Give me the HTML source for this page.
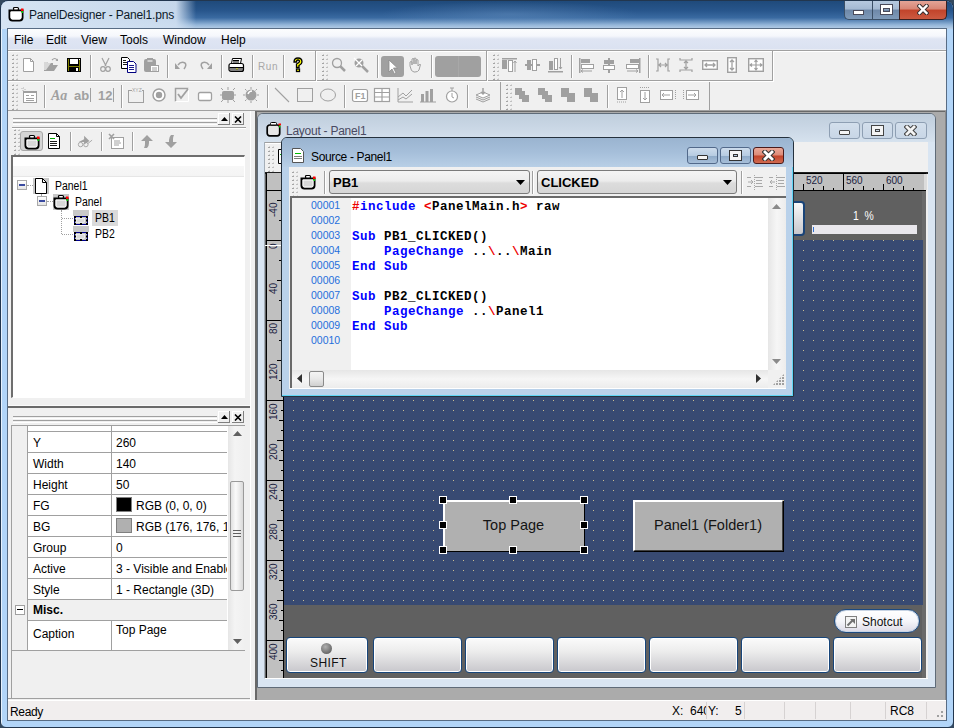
<!DOCTYPE html>
<html><head><meta charset="utf-8">
<style>
*{margin:0;padding:0;box-sizing:border-box}
html,body{width:954px;height:728px;overflow:hidden;background:#34495f}
body{position:relative;font-family:"Liberation Sans",sans-serif;font-size:12px;color:#000;line-height:1}
div,svg{position:absolute}
span{position:static}
.t{white-space:nowrap}
.sep{width:2px;border-left:1px solid #a0a0a0;border-right:1px solid #fff}
.grip{width:7px;background-image:radial-gradient(circle at 1.2px 1.2px,#b8b8b8 0.9px,transparent 1.4px);background-size:4px 4px}
.ic{width:16px;height:16px;overflow:visible}
.cb{border-radius:3px}

</style></head><body>
<!-- outer frame -->
<div style="left:0;top:0;width:954px;height:728px;border:1px solid #22364e;border-radius:8px 8px 6px 6px;background:linear-gradient(90deg,#e8f2fc 0,#e8f2fc 1px,#b2d5f8 1px,#b2d5f8 952px,#e8f2fc 952px)"></div>
<!-- title bar -->
<div style="left:1px;top:1px;width:952px;height:28px;border-radius:7px 7px 0 0;background:linear-gradient(180deg,#1f4a7b 0,#28568c 35%,#3a6aa1 60%,#93b5d8 85%,#b9d0e8 100%)"></div>
<div style="left:1px;top:1px;width:230px;height:28px;border-radius:7px 0 0 0;background:linear-gradient(90deg,rgba(214,228,243,1) 0,rgba(206,222,240,.95) 175px,rgba(206,222,240,0) 195px)"></div>
<div style="left:380px;top:1px;width:260px;height:22px;background:radial-gradient(ellipse at 50% 60%,rgba(120,160,205,.35),rgba(120,160,205,0) 70%)"></div>
<div class="t" style="left:29px;top:9px;font-size:12px;color:#0d1a2a;letter-spacing:-0.17px">PanelDesigner - Panel1.pns</div>
<!-- app icon -->
<svg class="ic" style="left:8px;top:6px" viewBox="0 0 16 16"><path d="M1.5 4.5h13v7q0 3-3 3h-7q-3 0-3-3z" fill="#fff" stroke="#000" stroke-width="2"/><path d="M3 6h10v5.5q0 1.5-1.5 1.5h-7Q3 13 3 11.5z" fill="#fff" stroke="#fff" stroke-width="1"/><rect x="5.5" y="1.5" width="5" height="2.5" rx="1" fill="#fff" stroke="#000" stroke-width="1.2"/><rect x="13" y="2.5" width="2.5" height="2.5" fill="#f00"/><rect x="13.5" y="5" width="1.5" height="2" fill="#0c0"/></svg>
<!-- caption buttons -->
<div style="left:844px;top:1px;width:28px;height:19px;border:1px solid #3b4f66;border-top:none;border-right:none;border-radius:0 0 0 5px;background:linear-gradient(180deg,#b6c9df 0,#a4b9d2 45%,#6e88a8 50%,#7f9ab9 100%)"></div>
<div style="left:872px;top:1px;width:27px;height:19px;border:1px solid #3b4f66;border-top:none;border-right:none;background:linear-gradient(180deg,#b6c9df 0,#a4b9d2 45%,#6e88a8 50%,#7f9ab9 100%)"></div>
<div style="left:899px;top:1px;width:48px;height:19px;border:1px solid #3b2020;border-top:none;border-radius:0 0 5px 0;background:linear-gradient(180deg,#e3a497 0,#d88574 45%,#c2432a 50%,#cc5a41 100%)"></div>
<div style="left:853px;top:10px;width:11px;height:5px;background:#fff;border:1px solid #4a4a5a"></div>
<div style="left:881px;top:5px;width:11px;height:9px;border:2px solid #fff;border-top-width:3px;box-shadow:0 0 0 1px #4a4a5a, inset 0 0 0 1px #4a4a5a"></div>
<svg style="left:917px;top:4px" width="12" height="11" viewBox="0 0 12 11"><path d="M2.5 2L9.5 9M9.5 2L2.5 9" stroke="#3a3030" stroke-width="4.4" stroke-linecap="square"/><path d="M2.5 2L9.5 9M9.5 2L2.5 9" stroke="#fff" stroke-width="2.4" stroke-linecap="square"/></svg>
<!-- client area -->
<div style="left:7px;top:28px;width:940px;height:693px;background:#f0f0f0;border:1px solid #586c84"></div>
<!-- menu bar -->
<div style="left:8px;top:29px;width:938px;height:20px;background:linear-gradient(180deg,#fcfdfe 0,#f5f7fc 35%,#dfe5f3 50%,#dbe2f1 100%)"></div>
<div style="left:8px;top:49px;width:938px;height:1px;background:#e9ecf3"></div>
<div style="left:8px;top:50px;width:938px;height:1px;background:#a0a0a0"></div>
<div style="left:8px;top:51px;width:938px;height:1px;background:#fff"></div>
<div class="t" style="left:14px;top:34px">File</div>
<div class="t" style="left:46px;top:34px">Edit</div>
<div class="t" style="left:81px;top:34px">View</div>
<div class="t" style="left:120px;top:34px">Tools</div>
<div class="t" style="left:163px;top:34px">Window</div>
<div class="t" style="left:221px;top:34px">Help</div>

<!-- toolbar bands row1 -->
<div style="left:8px;top:51px;width:309px;height:31px;border-right:1px solid #fff;border-bottom:1px solid #fff"><div style="left:0;top:0;width:308px;height:30px;border-right:1px solid #a0a0a0;border-bottom:1px solid #a0a0a0"></div></div>
<div style="left:317px;top:51px;width:171px;height:31px;border-right:1px solid #fff;border-bottom:1px solid #fff"><div style="left:0;top:0;width:170px;height:30px;border-right:1px solid #a0a0a0;border-bottom:1px solid #a0a0a0"></div></div>
<div style="left:488px;top:51px;width:286px;height:31px;border-right:1px solid #fff;border-bottom:1px solid #fff"><div style="left:0;top:0;width:285px;height:30px;border-right:1px solid #a0a0a0;border-bottom:1px solid #a0a0a0"></div></div>
<!-- row2 -->
<div style="left:8px;top:82px;width:493px;height:30px;"><div style="left:0;top:0;width:493px;height:29px;border-right:1px solid #a0a0a0;border-bottom:1px solid #a0a0a0"></div></div>
<div style="left:502px;top:82px;width:208px;height:30px;"><div style="left:0;top:0;width:208px;height:29px;border-right:1px solid #a0a0a0;border-bottom:1px solid #a0a0a0"></div></div>
<div style="left:8px;top:110px;width:938px;height:1px;background:#a0a0a0"></div>

<!-- grips -->
<div style="left:0;top:0;width:0;height:0"><div style="left:12px;top:55px;width:1px;height:1px;background:#a4a4a4"></div><div style="left:13px;top:54px;width:1px;height:1px;background:#cfcfcf"></div><div style="left:13px;top:55px;width:1px;height:1px;background:#a4a4a4"></div><div style="left:16px;top:55px;width:1px;height:1px;background:#c0c0c0"></div><div style="left:17px;top:54px;width:1px;height:1px;background:#dadada"></div><div style="left:17px;top:55px;width:1px;height:1px;background:#c0c0c0"></div><div style="left:12px;top:59px;width:1px;height:1px;background:#a4a4a4"></div><div style="left:13px;top:58px;width:1px;height:1px;background:#cfcfcf"></div><div style="left:13px;top:59px;width:1px;height:1px;background:#a4a4a4"></div><div style="left:16px;top:59px;width:1px;height:1px;background:#c0c0c0"></div><div style="left:17px;top:58px;width:1px;height:1px;background:#dadada"></div><div style="left:17px;top:59px;width:1px;height:1px;background:#c0c0c0"></div><div style="left:12px;top:63px;width:1px;height:1px;background:#a4a4a4"></div><div style="left:13px;top:62px;width:1px;height:1px;background:#cfcfcf"></div><div style="left:13px;top:63px;width:1px;height:1px;background:#a4a4a4"></div><div style="left:16px;top:63px;width:1px;height:1px;background:#c0c0c0"></div><div style="left:17px;top:62px;width:1px;height:1px;background:#dadada"></div><div style="left:17px;top:63px;width:1px;height:1px;background:#c0c0c0"></div><div style="left:12px;top:67px;width:1px;height:1px;background:#a4a4a4"></div><div style="left:13px;top:66px;width:1px;height:1px;background:#cfcfcf"></div><div style="left:13px;top:67px;width:1px;height:1px;background:#a4a4a4"></div><div style="left:16px;top:67px;width:1px;height:1px;background:#c0c0c0"></div><div style="left:17px;top:66px;width:1px;height:1px;background:#dadada"></div><div style="left:17px;top:67px;width:1px;height:1px;background:#c0c0c0"></div><div style="left:12px;top:71px;width:1px;height:1px;background:#a4a4a4"></div><div style="left:13px;top:70px;width:1px;height:1px;background:#cfcfcf"></div><div style="left:13px;top:71px;width:1px;height:1px;background:#a4a4a4"></div><div style="left:16px;top:71px;width:1px;height:1px;background:#c0c0c0"></div><div style="left:17px;top:70px;width:1px;height:1px;background:#dadada"></div><div style="left:17px;top:71px;width:1px;height:1px;background:#c0c0c0"></div><div style="left:12px;top:75px;width:1px;height:1px;background:#a4a4a4"></div><div style="left:13px;top:74px;width:1px;height:1px;background:#cfcfcf"></div><div style="left:13px;top:75px;width:1px;height:1px;background:#a4a4a4"></div><div style="left:16px;top:75px;width:1px;height:1px;background:#c0c0c0"></div><div style="left:17px;top:74px;width:1px;height:1px;background:#dadada"></div><div style="left:17px;top:75px;width:1px;height:1px;background:#c0c0c0"></div><div style="left:12px;top:79px;width:1px;height:1px;background:#a4a4a4"></div><div style="left:13px;top:78px;width:1px;height:1px;background:#cfcfcf"></div><div style="left:13px;top:79px;width:1px;height:1px;background:#a4a4a4"></div><div style="left:16px;top:79px;width:1px;height:1px;background:#c0c0c0"></div><div style="left:17px;top:78px;width:1px;height:1px;background:#dadada"></div><div style="left:17px;top:79px;width:1px;height:1px;background:#c0c0c0"></div></div>
<div style="left:0;top:0;width:0;height:0"><div style="left:322px;top:55px;width:1px;height:1px;background:#a4a4a4"></div><div style="left:323px;top:54px;width:1px;height:1px;background:#cfcfcf"></div><div style="left:323px;top:55px;width:1px;height:1px;background:#a4a4a4"></div><div style="left:326px;top:55px;width:1px;height:1px;background:#c0c0c0"></div><div style="left:327px;top:54px;width:1px;height:1px;background:#dadada"></div><div style="left:327px;top:55px;width:1px;height:1px;background:#c0c0c0"></div><div style="left:322px;top:59px;width:1px;height:1px;background:#a4a4a4"></div><div style="left:323px;top:58px;width:1px;height:1px;background:#cfcfcf"></div><div style="left:323px;top:59px;width:1px;height:1px;background:#a4a4a4"></div><div style="left:326px;top:59px;width:1px;height:1px;background:#c0c0c0"></div><div style="left:327px;top:58px;width:1px;height:1px;background:#dadada"></div><div style="left:327px;top:59px;width:1px;height:1px;background:#c0c0c0"></div><div style="left:322px;top:63px;width:1px;height:1px;background:#a4a4a4"></div><div style="left:323px;top:62px;width:1px;height:1px;background:#cfcfcf"></div><div style="left:323px;top:63px;width:1px;height:1px;background:#a4a4a4"></div><div style="left:326px;top:63px;width:1px;height:1px;background:#c0c0c0"></div><div style="left:327px;top:62px;width:1px;height:1px;background:#dadada"></div><div style="left:327px;top:63px;width:1px;height:1px;background:#c0c0c0"></div><div style="left:322px;top:67px;width:1px;height:1px;background:#a4a4a4"></div><div style="left:323px;top:66px;width:1px;height:1px;background:#cfcfcf"></div><div style="left:323px;top:67px;width:1px;height:1px;background:#a4a4a4"></div><div style="left:326px;top:67px;width:1px;height:1px;background:#c0c0c0"></div><div style="left:327px;top:66px;width:1px;height:1px;background:#dadada"></div><div style="left:327px;top:67px;width:1px;height:1px;background:#c0c0c0"></div><div style="left:322px;top:71px;width:1px;height:1px;background:#a4a4a4"></div><div style="left:323px;top:70px;width:1px;height:1px;background:#cfcfcf"></div><div style="left:323px;top:71px;width:1px;height:1px;background:#a4a4a4"></div><div style="left:326px;top:71px;width:1px;height:1px;background:#c0c0c0"></div><div style="left:327px;top:70px;width:1px;height:1px;background:#dadada"></div><div style="left:327px;top:71px;width:1px;height:1px;background:#c0c0c0"></div><div style="left:322px;top:75px;width:1px;height:1px;background:#a4a4a4"></div><div style="left:323px;top:74px;width:1px;height:1px;background:#cfcfcf"></div><div style="left:323px;top:75px;width:1px;height:1px;background:#a4a4a4"></div><div style="left:326px;top:75px;width:1px;height:1px;background:#c0c0c0"></div><div style="left:327px;top:74px;width:1px;height:1px;background:#dadada"></div><div style="left:327px;top:75px;width:1px;height:1px;background:#c0c0c0"></div><div style="left:322px;top:79px;width:1px;height:1px;background:#a4a4a4"></div><div style="left:323px;top:78px;width:1px;height:1px;background:#cfcfcf"></div><div style="left:323px;top:79px;width:1px;height:1px;background:#a4a4a4"></div><div style="left:326px;top:79px;width:1px;height:1px;background:#c0c0c0"></div><div style="left:327px;top:78px;width:1px;height:1px;background:#dadada"></div><div style="left:327px;top:79px;width:1px;height:1px;background:#c0c0c0"></div></div>
<div style="left:0;top:0;width:0;height:0"><div style="left:493px;top:55px;width:1px;height:1px;background:#a4a4a4"></div><div style="left:494px;top:54px;width:1px;height:1px;background:#cfcfcf"></div><div style="left:494px;top:55px;width:1px;height:1px;background:#a4a4a4"></div><div style="left:497px;top:55px;width:1px;height:1px;background:#c0c0c0"></div><div style="left:498px;top:54px;width:1px;height:1px;background:#dadada"></div><div style="left:498px;top:55px;width:1px;height:1px;background:#c0c0c0"></div><div style="left:493px;top:59px;width:1px;height:1px;background:#a4a4a4"></div><div style="left:494px;top:58px;width:1px;height:1px;background:#cfcfcf"></div><div style="left:494px;top:59px;width:1px;height:1px;background:#a4a4a4"></div><div style="left:497px;top:59px;width:1px;height:1px;background:#c0c0c0"></div><div style="left:498px;top:58px;width:1px;height:1px;background:#dadada"></div><div style="left:498px;top:59px;width:1px;height:1px;background:#c0c0c0"></div><div style="left:493px;top:63px;width:1px;height:1px;background:#a4a4a4"></div><div style="left:494px;top:62px;width:1px;height:1px;background:#cfcfcf"></div><div style="left:494px;top:63px;width:1px;height:1px;background:#a4a4a4"></div><div style="left:497px;top:63px;width:1px;height:1px;background:#c0c0c0"></div><div style="left:498px;top:62px;width:1px;height:1px;background:#dadada"></div><div style="left:498px;top:63px;width:1px;height:1px;background:#c0c0c0"></div><div style="left:493px;top:67px;width:1px;height:1px;background:#a4a4a4"></div><div style="left:494px;top:66px;width:1px;height:1px;background:#cfcfcf"></div><div style="left:494px;top:67px;width:1px;height:1px;background:#a4a4a4"></div><div style="left:497px;top:67px;width:1px;height:1px;background:#c0c0c0"></div><div style="left:498px;top:66px;width:1px;height:1px;background:#dadada"></div><div style="left:498px;top:67px;width:1px;height:1px;background:#c0c0c0"></div><div style="left:493px;top:71px;width:1px;height:1px;background:#a4a4a4"></div><div style="left:494px;top:70px;width:1px;height:1px;background:#cfcfcf"></div><div style="left:494px;top:71px;width:1px;height:1px;background:#a4a4a4"></div><div style="left:497px;top:71px;width:1px;height:1px;background:#c0c0c0"></div><div style="left:498px;top:70px;width:1px;height:1px;background:#dadada"></div><div style="left:498px;top:71px;width:1px;height:1px;background:#c0c0c0"></div><div style="left:493px;top:75px;width:1px;height:1px;background:#a4a4a4"></div><div style="left:494px;top:74px;width:1px;height:1px;background:#cfcfcf"></div><div style="left:494px;top:75px;width:1px;height:1px;background:#a4a4a4"></div><div style="left:497px;top:75px;width:1px;height:1px;background:#c0c0c0"></div><div style="left:498px;top:74px;width:1px;height:1px;background:#dadada"></div><div style="left:498px;top:75px;width:1px;height:1px;background:#c0c0c0"></div><div style="left:493px;top:79px;width:1px;height:1px;background:#a4a4a4"></div><div style="left:494px;top:78px;width:1px;height:1px;background:#cfcfcf"></div><div style="left:494px;top:79px;width:1px;height:1px;background:#a4a4a4"></div><div style="left:497px;top:79px;width:1px;height:1px;background:#c0c0c0"></div><div style="left:498px;top:78px;width:1px;height:1px;background:#dadada"></div><div style="left:498px;top:79px;width:1px;height:1px;background:#c0c0c0"></div></div>
<div style="left:0;top:0;width:0;height:0"><div style="left:12px;top:85px;width:1px;height:1px;background:#a4a4a4"></div><div style="left:13px;top:84px;width:1px;height:1px;background:#cfcfcf"></div><div style="left:13px;top:85px;width:1px;height:1px;background:#a4a4a4"></div><div style="left:16px;top:85px;width:1px;height:1px;background:#c0c0c0"></div><div style="left:17px;top:84px;width:1px;height:1px;background:#dadada"></div><div style="left:17px;top:85px;width:1px;height:1px;background:#c0c0c0"></div><div style="left:12px;top:89px;width:1px;height:1px;background:#a4a4a4"></div><div style="left:13px;top:88px;width:1px;height:1px;background:#cfcfcf"></div><div style="left:13px;top:89px;width:1px;height:1px;background:#a4a4a4"></div><div style="left:16px;top:89px;width:1px;height:1px;background:#c0c0c0"></div><div style="left:17px;top:88px;width:1px;height:1px;background:#dadada"></div><div style="left:17px;top:89px;width:1px;height:1px;background:#c0c0c0"></div><div style="left:12px;top:93px;width:1px;height:1px;background:#a4a4a4"></div><div style="left:13px;top:92px;width:1px;height:1px;background:#cfcfcf"></div><div style="left:13px;top:93px;width:1px;height:1px;background:#a4a4a4"></div><div style="left:16px;top:93px;width:1px;height:1px;background:#c0c0c0"></div><div style="left:17px;top:92px;width:1px;height:1px;background:#dadada"></div><div style="left:17px;top:93px;width:1px;height:1px;background:#c0c0c0"></div><div style="left:12px;top:97px;width:1px;height:1px;background:#a4a4a4"></div><div style="left:13px;top:96px;width:1px;height:1px;background:#cfcfcf"></div><div style="left:13px;top:97px;width:1px;height:1px;background:#a4a4a4"></div><div style="left:16px;top:97px;width:1px;height:1px;background:#c0c0c0"></div><div style="left:17px;top:96px;width:1px;height:1px;background:#dadada"></div><div style="left:17px;top:97px;width:1px;height:1px;background:#c0c0c0"></div><div style="left:12px;top:101px;width:1px;height:1px;background:#a4a4a4"></div><div style="left:13px;top:100px;width:1px;height:1px;background:#cfcfcf"></div><div style="left:13px;top:101px;width:1px;height:1px;background:#a4a4a4"></div><div style="left:16px;top:101px;width:1px;height:1px;background:#c0c0c0"></div><div style="left:17px;top:100px;width:1px;height:1px;background:#dadada"></div><div style="left:17px;top:101px;width:1px;height:1px;background:#c0c0c0"></div><div style="left:12px;top:105px;width:1px;height:1px;background:#a4a4a4"></div><div style="left:13px;top:104px;width:1px;height:1px;background:#cfcfcf"></div><div style="left:13px;top:105px;width:1px;height:1px;background:#a4a4a4"></div><div style="left:16px;top:105px;width:1px;height:1px;background:#c0c0c0"></div><div style="left:17px;top:104px;width:1px;height:1px;background:#dadada"></div><div style="left:17px;top:105px;width:1px;height:1px;background:#c0c0c0"></div><div style="left:12px;top:109px;width:1px;height:1px;background:#a4a4a4"></div><div style="left:13px;top:108px;width:1px;height:1px;background:#cfcfcf"></div><div style="left:13px;top:109px;width:1px;height:1px;background:#a4a4a4"></div><div style="left:16px;top:109px;width:1px;height:1px;background:#c0c0c0"></div><div style="left:17px;top:108px;width:1px;height:1px;background:#dadada"></div><div style="left:17px;top:109px;width:1px;height:1px;background:#c0c0c0"></div></div>
<div style="left:0;top:0;width:0;height:0"><div style="left:506px;top:85px;width:1px;height:1px;background:#a4a4a4"></div><div style="left:507px;top:84px;width:1px;height:1px;background:#cfcfcf"></div><div style="left:507px;top:85px;width:1px;height:1px;background:#a4a4a4"></div><div style="left:510px;top:85px;width:1px;height:1px;background:#c0c0c0"></div><div style="left:511px;top:84px;width:1px;height:1px;background:#dadada"></div><div style="left:511px;top:85px;width:1px;height:1px;background:#c0c0c0"></div><div style="left:506px;top:89px;width:1px;height:1px;background:#a4a4a4"></div><div style="left:507px;top:88px;width:1px;height:1px;background:#cfcfcf"></div><div style="left:507px;top:89px;width:1px;height:1px;background:#a4a4a4"></div><div style="left:510px;top:89px;width:1px;height:1px;background:#c0c0c0"></div><div style="left:511px;top:88px;width:1px;height:1px;background:#dadada"></div><div style="left:511px;top:89px;width:1px;height:1px;background:#c0c0c0"></div><div style="left:506px;top:93px;width:1px;height:1px;background:#a4a4a4"></div><div style="left:507px;top:92px;width:1px;height:1px;background:#cfcfcf"></div><div style="left:507px;top:93px;width:1px;height:1px;background:#a4a4a4"></div><div style="left:510px;top:93px;width:1px;height:1px;background:#c0c0c0"></div><div style="left:511px;top:92px;width:1px;height:1px;background:#dadada"></div><div style="left:511px;top:93px;width:1px;height:1px;background:#c0c0c0"></div><div style="left:506px;top:97px;width:1px;height:1px;background:#a4a4a4"></div><div style="left:507px;top:96px;width:1px;height:1px;background:#cfcfcf"></div><div style="left:507px;top:97px;width:1px;height:1px;background:#a4a4a4"></div><div style="left:510px;top:97px;width:1px;height:1px;background:#c0c0c0"></div><div style="left:511px;top:96px;width:1px;height:1px;background:#dadada"></div><div style="left:511px;top:97px;width:1px;height:1px;background:#c0c0c0"></div><div style="left:506px;top:101px;width:1px;height:1px;background:#a4a4a4"></div><div style="left:507px;top:100px;width:1px;height:1px;background:#cfcfcf"></div><div style="left:507px;top:101px;width:1px;height:1px;background:#a4a4a4"></div><div style="left:510px;top:101px;width:1px;height:1px;background:#c0c0c0"></div><div style="left:511px;top:100px;width:1px;height:1px;background:#dadada"></div><div style="left:511px;top:101px;width:1px;height:1px;background:#c0c0c0"></div><div style="left:506px;top:105px;width:1px;height:1px;background:#a4a4a4"></div><div style="left:507px;top:104px;width:1px;height:1px;background:#cfcfcf"></div><div style="left:507px;top:105px;width:1px;height:1px;background:#a4a4a4"></div><div style="left:510px;top:105px;width:1px;height:1px;background:#c0c0c0"></div><div style="left:511px;top:104px;width:1px;height:1px;background:#dadada"></div><div style="left:511px;top:105px;width:1px;height:1px;background:#c0c0c0"></div><div style="left:506px;top:109px;width:1px;height:1px;background:#a4a4a4"></div><div style="left:507px;top:108px;width:1px;height:1px;background:#cfcfcf"></div><div style="left:507px;top:109px;width:1px;height:1px;background:#a4a4a4"></div><div style="left:510px;top:109px;width:1px;height:1px;background:#c0c0c0"></div><div style="left:511px;top:108px;width:1px;height:1px;background:#dadada"></div><div style="left:511px;top:109px;width:1px;height:1px;background:#c0c0c0"></div></div>

<!-- separators row1 -->
<div class="sep" style="left:90px;top:55px;height:23px"></div>
<div class="sep" style="left:167px;top:55px;height:23px"></div>
<div class="sep" style="left:221px;top:55px;height:23px"></div>
<div class="sep" style="left:252px;top:55px;height:23px"></div>
<div class="sep" style="left:283px;top:55px;height:23px"></div>
<div class="sep" style="left:377px;top:55px;height:23px"></div>
<div class="sep" style="left:431px;top:55px;height:23px"></div>
<div class="sep" style="left:571px;top:55px;height:23px"></div>
<div class="sep" style="left:648px;top:55px;height:23px"></div>
<!-- separators row2 -->
<div class="sep" style="left:44px;top:85px;height:23px"></div>
<div class="sep" style="left:121px;top:85px;height:23px"></div>
<div class="sep" style="left:267px;top:85px;height:23px"></div>
<div class="sep" style="left:344px;top:85px;height:23px"></div>
<div class="sep" style="left:467px;top:85px;height:23px"></div>
<div class="sep" style="left:607px;top:85px;height:23px"></div>

<!-- row1 icons -->
<svg class="ic" style="left:22px;top:57px" viewBox="0 0 16 16"><path d="M1.5 1.5h7l3 3v10h-10z" fill="#fff" stroke="#a0a0a0"/><path d="M8.5 1.5v3h3" fill="none" stroke="#a0a0a0"/></svg>
<svg class="ic" style="left:43px;top:57px" viewBox="0 0 16 16"><path d="M1 5h3l1 1h5v2h5l-4 6H1z" fill="#a0a0a0"/><path d="M1 5h3l1 1h3L3 13H1z" fill="#d8d8d8"/><path d="M9 3q3-3 5 0" fill="none" stroke="#a0a0a0" stroke-width="1.2"/><path d="M12.5 4l2.5 0 0-2.5z" fill="#a0a0a0"/></svg>
<svg class="ic" style="left:66px;top:57px" viewBox="0 0 16 16"><rect x="1" y="1" width="14" height="14" fill="#000"/><rect x="2" y="2" width="1" height="12" fill="#808000"/><rect x="13" y="2" width="1" height="12" fill="#808000"/><rect x="3" y="9" width="10" height="1" fill="#808000"/><rect x="4" y="2" width="8" height="5" fill="#fff"/><rect x="10" y="11" width="2" height="3" fill="#fff"/><rect x="13" y="2" width="1" height="1" fill="#fff"/></svg>
<svg class="ic" style="left:98px;top:57px" viewBox="0 0 16 16"><path d="M4 1l4 8M11 1L7 9" stroke="#a0a0a0" stroke-width="1.2" fill="none"/><circle cx="5" cy="12" r="2.3" fill="none" stroke="#a0a0a0" stroke-width="1.2"/><circle cx="10" cy="12" r="2.3" fill="none" stroke="#a0a0a0" stroke-width="1.2"/></svg>
<svg class="ic" style="left:121px;top:57px" viewBox="0 0 16 16"><path d="M0.5 0.5h6l2 2v9h-8z" fill="#fff" stroke="#000"/><path d="M2 3.5h3M2 5.5h4M2 7.5h4" stroke="#000" stroke-width=".9"/><path d="M6.5 4.5h6l2.5 2.5v8.5h-8.5z" fill="#fff" stroke="#000080"/><path d="M8 8.5h5M8 10.5h5M8 12.5h5" stroke="#000080" stroke-width=".9"/></svg>
<svg class="ic" style="left:143px;top:57px" viewBox="0 0 16 16"><rect x="1" y="2" width="12" height="13" rx="2" fill="#a0a0a0"/><rect x="4" y="1" width="6" height="2" fill="#a0a0a0"/><rect x="4.5" y="3.5" width="5" height="1" fill="#fff"/><rect x="7.5" y="8.5" width="8" height="6" fill="#fff" stroke="#a0a0a0"/><path d="M9 11h5M9 13h5" stroke="#a0a0a0"/></svg>
<svg class="ic" style="left:174px;top:57px" viewBox="0 0 16 16"><path d="M4 8q3-4 7-2q2 2-1 6" fill="none" stroke="#a0a0a0" stroke-width="1.5"/><path d="M1 6l5 6H1z" fill="#a0a0a0"/></svg>
<svg class="ic" style="left:197px;top:57px" viewBox="0 0 16 16"><path d="M12 8q-3-4-7-2q-2 2 1 6" fill="none" stroke="#a0a0a0" stroke-width="1.5"/><path d="M15 6l-5 6h5z" fill="#a0a0a0"/></svg>
<svg class="ic" style="left:228px;top:57px" viewBox="0 0 16 16"><path d="M4.5 1.5h9l-1 5h-9z" fill="#fff" stroke="#000"/><path d="M5 3.5h6M5 5h6" stroke="#000"/><rect x="1" y="6.5" width="14.5" height="8" rx="2" fill="#fff" stroke="#000" stroke-width="1.2"/><rect x="1.5" y="10" width="14" height="1.5" fill="#000"/><rect x="8" y="11.5" width="2" height="1" fill="#ee0"/><path d="M2 13h13" stroke="#000"/></svg>
<div class="t" style="left:258px;top:62px;font-size:10px;color:#a8a8a8;letter-spacing:.6px">Run</div>
<svg class="ic" style="left:290px;top:57px" viewBox="0 0 16 16"><path d="M4 5q0-4 4-4t4 4q0 2-3 3.5v2h-2.5V7q3-1.5 3-2.5q0-1.5-1.5-1.5t-1.5 2z" fill="#ff0" stroke="#000" stroke-width="1.3"/><rect x="6.5" y="12" width="3" height="2.5" fill="#ff0" stroke="#000" stroke-width="1.3"/></svg>
<!-- band2 row1 -->
<svg class="ic" style="left:331px;top:57px" viewBox="0 0 16 16"><circle cx="6" cy="6" r="4.5" fill="none" stroke="#a0a0a0" stroke-width="1.3"/><path d="M9 9l5 5" stroke="#a0a0a0" stroke-width="2.5"/></svg>
<svg class="ic" style="left:353px;top:57px" viewBox="0 0 16 16"><circle cx="6" cy="6" r="4.5" fill="#a0a0a0"/><path d="M1 1l10 10M3 9L9 3" stroke="#fff" stroke-width="1.3"/><path d="M9 9l6 6" stroke="#a0a0a0" stroke-width="2.5"/></svg>
<div class="cb" style="left:381px;top:56px;width:23px;height:21px;background:#a0a0a0"></div>
<svg class="ic" style="left:385px;top:59px" viewBox="0 0 16 16"><path d="M4 1v12l3-3 2.5 5 1.5-1-2.5-5h4z" fill="#fff" stroke="#8a8a8a" stroke-width=".8"/></svg>
<svg class="ic" style="left:407px;top:57px" viewBox="0 0 16 16"><path d="M3 9V5q1-1 2 0v3V2q1-1 2 0v5V1.5q1-1 2 0V7V3q1-1 2 0v6q1-2 2.5-1.5L12 13q-1 2-4 2H7q-3 0-4-6z" fill="none" stroke="#a0a0a0"/></svg>
<div class="cb" style="left:435px;top:56px;width:46px;height:21px;background:#a0a0a0"></div>
<div style="left:458px;top:56px;width:1px;height:21px;background:#a8a8a8"></div>
<!-- band3 row1: align icons -->
<svg class="ic" style="left:501px;top:57px" viewBox="0 0 16 16"><rect x="1" y="1" width="15" height="1.5" fill="#a0a0a0"/><rect x="1" y="3" width="5" height="9" fill="#a0a0a0"/><rect x="7.5" y="3.5" width="4" height="11" fill="#fff" stroke="#a0a0a0"/><path d="M14 4v11M12.5 6l1.5-2 1.5 2" stroke="#a0a0a0" fill="none"/></svg>
<svg class="ic" style="left:524px;top:57px" viewBox="0 0 16 16"><rect x="1" y="7" width="15" height="2" fill="#a0a0a0"/><rect x="3" y="3" width="4" height="10" fill="#a0a0a0"/><rect x="8.5" y="2.5" width="4" height="11" fill="#fff" stroke="#a0a0a0"/></svg>
<svg class="ic" style="left:547px;top:57px" viewBox="0 0 16 16"><rect x="1" y="14" width="15" height="1.5" fill="#a0a0a0"/><rect x="2" y="4" width="4" height="9" fill="#a0a0a0"/><rect x="7.5" y="1.5" width="3" height="11" fill="#fff" stroke="#a0a0a0"/><path d="M13.5 1v11M12 10l1.5 2 1.5-2" stroke="#a0a0a0" fill="none"/></svg>
<svg class="ic" style="left:578px;top:57px" viewBox="0 0 16 16"><rect x="1" y="1" width="1.5" height="15" fill="#a0a0a0"/><rect x="3" y="2" width="9" height="4" fill="#a0a0a0"/><rect x="3.5" y="7.5" width="12" height="4" fill="#fff" stroke="#a0a0a0"/><path d="M3 14h11M5 12.5L3 14l2 1.5" stroke="#a0a0a0" fill="none"/></svg>
<svg class="ic" style="left:601px;top:57px" viewBox="0 0 16 16"><rect x="7" y="1" width="2" height="15" fill="#a0a0a0"/><rect x="3" y="3" width="10" height="4" fill="#a0a0a0"/><rect x="2.5" y="8.5" width="11" height="4" fill="#fff" stroke="#a0a0a0"/></svg>
<svg class="ic" style="left:625px;top:57px" viewBox="0 0 16 16"><rect x="14" y="1" width="1.5" height="15" fill="#a0a0a0"/><rect x="5" y="2" width="9" height="4" fill="#a0a0a0"/><rect x="1.5" y="7.5" width="12" height="4" fill="#fff" stroke="#a0a0a0"/><path d="M2 14h11M11 12.5l2 1.5-2 1.5" stroke="#a0a0a0" fill="none"/></svg>
<svg class="ic" style="left:655px;top:57px" viewBox="0 0 16 16"><path d="M1 2h2v12H1M15 2h-2v12h2M4 8h8M6 6l-2 2 2 2M10 6l2 2-2 2" stroke="#a0a0a0" stroke-width="1.2" fill="none"/></svg>
<svg class="ic" style="left:678px;top:57px" viewBox="0 0 16 16"><path d="M2 1v2h12V1M2 15v-2h12v2M8 4v8M6 6l2-2 2 2M6 10l2 2 2-2" stroke="#a0a0a0" stroke-width="1.2" fill="none"/></svg>
<svg class="ic" style="left:702px;top:57px" viewBox="0 0 16 16"><rect x="0.7" y="3.7" width="14.6" height="8.6" fill="#fff" stroke="#a0a0a0" stroke-width="1.4"/><path d="M3 8h10M5 6l-2 2 2 2M11 6l2 2-2 2" stroke="#a0a0a0" stroke-width="1.3" fill="none"/></svg>
<svg class="ic" style="left:724px;top:57px" viewBox="0 0 16 16"><rect x="3.7" y="0.7" width="8.6" height="14.6" fill="#fff" stroke="#a0a0a0" stroke-width="1.4"/><path d="M8 3v10M6 5l2-2 2 2M6 11l2 2 2-2" stroke="#a0a0a0" stroke-width="1.3" fill="none"/></svg>
<svg class="ic" style="left:748px;top:57px" viewBox="0 0 16 16"><rect x="0.7" y="1.7" width="14.6" height="12.6" fill="#fff" stroke="#a0a0a0" stroke-width="1.4"/><path d="M2 8h12M8 3v10M4 6.5L2 8l2 1.5M12 6.5L14 8l-2 1.5M6.5 5L8 3l1.5 2M6.5 11L8 13l1.5-2" stroke="#a0a0a0" stroke-width="1.2" fill="none"/></svg>

<!-- row2 icons -->
<svg class="ic" style="left:21px;top:87px" viewBox="0 0 16 16"><path d="M0.5 1.5h1M2.5 0.5v1M1.5 3.5h1M3.5 2.5h1" stroke="#b0b0b0"/><rect x="2.5" y="4.5" width="13" height="11" fill="#fff" stroke="#a0a0a0"/><path d="M3 5.5h12" stroke="#a0a0a0"/><path d="M5 8.5h3M10 8.5h3M5 11.5h8M5 13.5h8" stroke="#a0a0a0"/></svg>
<div class="t" style="left:51px;top:89px;font-family:'Liberation Serif',serif;font-style:italic;font-weight:bold;font-size:14px;color:#a0a0a0">Aa</div>
<div class="t" style="left:74px;top:89px;font-weight:bold;font-size:13px;color:#a0a0a0">ab</div>
<div style="left:90px;top:88px;width:1px;height:14px;background:#a0a0a0"></div>
<div class="t" style="left:98px;top:89px;font-weight:bold;font-size:13px;color:#a0a0a0">12</div>
<div style="left:113px;top:88px;width:1px;height:14px;background:#a0a0a0"></div>
<svg class="ic" style="left:128px;top:87px" viewBox="0 0 16 16"><rect x="0.5" y="3.5" width="15" height="12" fill="none" stroke="#a0a0a0"/><rect x="4" y="0" width="10" height="5" fill="#f0f0f0"/><text x="4" y="4.5" font-size="5" fill="#a0a0a0" font-family="Liberation Sans">XYZ</text></svg>
<svg class="ic" style="left:151px;top:87px" viewBox="0 0 16 16"><circle cx="8" cy="8" r="6" fill="#fff" stroke="#a0a0a0" stroke-width="1.5"/><circle cx="8" cy="8" r="3.2" fill="#a0a0a0"/></svg>
<svg class="ic" style="left:174px;top:87px" viewBox="0 0 16 16"><path d="M1.5 14.5V1.5h13" fill="none" stroke="#a0a0a0" stroke-width="1.5"/><path d="M1.5 14.5h13V1.5" fill="none" stroke="#fff"/><path d="M4 7l3 4 7-9" fill="none" stroke="#a0a0a0" stroke-width="1.8"/></svg>
<svg class="ic" style="left:197px;top:87px" viewBox="0 0 16 16"><rect x="1.5" y="5.5" width="13" height="8" rx="1.5" fill="#fff" stroke="#a0a0a0" stroke-width="1.3"/></svg>
<svg class="ic" style="left:220px;top:87px" viewBox="0 0 16 16"><rect x="2.5" y="4.5" width="11" height="8" rx="1" fill="#a0a0a0" stroke="#a0a0a0"/><path d="M8 0v3M8 13v3M0 8h2M14 8h2M1 1l2 2M15 1l-2 2M1 15l2-2M15 15l-2-2" stroke="#a0a0a0"/></svg>
<svg class="ic" style="left:243px;top:87px" viewBox="0 0 16 16"><circle cx="8" cy="8" r="5.5" fill="#a0a0a0"/><path d="M5 7q1-3 4-3" stroke="#fff" stroke-width="1.5" fill="none"/><path d="M8 0v2M8 14v2M0 8h2M14 8h2M2 2l1.5 1.5M14 2l-1.5 1.5M2 14l1.5-1.5M14 14l-1.5-1.5" stroke="#a0a0a0"/></svg>
<svg class="ic" style="left:274px;top:87px" viewBox="0 0 16 16"><path d="M1 1l14 14" stroke="#a0a0a0" stroke-width="1.1"/></svg>
<svg class="ic" style="left:297px;top:87px" viewBox="0 0 16 16"><rect x="0.5" y="1.5" width="15" height="13" fill="none" stroke="#a0a0a0"/></svg>
<svg class="ic" style="left:320px;top:87px" viewBox="0 0 16 16"><ellipse cx="8" cy="8" rx="7.5" ry="6" fill="none" stroke="#a0a0a0"/></svg>
<svg class="ic" style="left:352px;top:87px" viewBox="0 0 16 16"><rect x="0.5" y="2.5" width="15" height="12" rx="2" fill="#fff" stroke="#a0a0a0" stroke-width="1.2"/><text x="3" y="12" font-size="9" font-weight="bold" fill="#a0a0a0" font-family="Liberation Sans">F1</text></svg>
<svg class="ic" style="left:374px;top:87px" viewBox="0 0 16 16"><rect x="0.5" y="1.5" width="15" height="13" fill="#fff" stroke="#a0a0a0" stroke-width="1.2"/><path d="M1 5.5h14M1 10h14M8 2v12" stroke="#a0a0a0" stroke-width="1.2"/></svg>
<svg class="ic" style="left:397px;top:87px" viewBox="0 0 16 16"><path d="M1 1v14h15" stroke="#a0a0a0" fill="none"/><path d="M1 10l5-4 3 3 6-6M1 13l5-3 3 2 6-5" stroke="#a0a0a0" fill="none"/></svg>
<svg class="ic" style="left:420px;top:87px" viewBox="0 0 16 16"><rect x="1" y="7" width="3" height="8" fill="#a0a0a0"/><rect x="5.5" y="4" width="3" height="11" fill="#a0a0a0"/><rect x="10" y="2" width="3" height="13" fill="#a0a0a0"/><path d="M0 15h16" stroke="#a0a0a0"/></svg>
<svg class="ic" style="left:444px;top:87px" viewBox="0 0 16 16"><circle cx="8" cy="9.5" r="5.5" fill="#fff" stroke="#a0a0a0" stroke-width="1.2"/><path d="M6 1h4M8 1v3M8 6v4l2 1" stroke="#a0a0a0" fill="none"/></svg>
<svg class="ic" style="left:475px;top:87px" viewBox="0 0 16 16"><path d="M1 8l7-3 7 3-7 3z" fill="#fff" stroke="#a0a0a0"/><path d="M1 10l7 3 7-3M1 12l7 3 7-3" fill="none" stroke="#a0a0a0"/><path d="M8 1v6M6 5l2 2 2-2" stroke="#a0a0a0" stroke-width="1.5" fill="none"/></svg>
<!-- band2 row2 -->
<svg class="ic" style="left:514px;top:87px" viewBox="0 0 16 16"><path d="M1 1h7v3h3v4h4v7H8v-3H5V8H1z" fill="#a0a0a0"/></svg>
<svg class="ic" style="left:537px;top:87px" viewBox="0 0 16 16"><path d="M1 1h7v3h3v4h4v7H8v-3H5V8H1z" fill="#a0a0a0"/></svg>
<svg class="ic" style="left:560px;top:87px" viewBox="0 0 16 16"><path d="M1 1h8v5h6v9H7v-5H1z" fill="#a0a0a0"/></svg>
<svg class="ic" style="left:583px;top:87px" viewBox="0 0 16 16"><path d="M1 1h8v5h6v9H7v-5H1z" fill="#a0a0a0"/></svg>
<svg class="ic" style="left:614px;top:87px" viewBox="0 0 16 16"><rect x="3.5" y="0.5" width="9" height="12" fill="#fff" stroke="#a0a0a0"/><path d="M8 3v8M6 5l2-2 2 2" stroke="#a0a0a0" fill="none"/><path d="M3 15h10" stroke="#a0a0a0" stroke-dasharray="1 1"/></svg>
<svg class="ic" style="left:637px;top:87px" viewBox="0 0 16 16"><path d="M3 0.5h10" stroke="#a0a0a0" stroke-dasharray="1 1"/><rect x="3.5" y="3.5" width="9" height="12" fill="#fff" stroke="#a0a0a0"/><path d="M8 5v8M6 11l2 2 2-2" stroke="#a0a0a0" fill="none"/></svg>
<svg class="ic" style="left:660px;top:87px" viewBox="0 0 16 16"><rect x="0.5" y="3.5" width="12" height="9" fill="#fff" stroke="#a0a0a0"/><path d="M15.5 3v10" stroke="#a0a0a0" stroke-dasharray="1 1"/><path d="M2 8h8M4 6L2 8l2 2" stroke="#a0a0a0" fill="none"/></svg>
<svg class="ic" style="left:683px;top:87px" viewBox="0 0 16 16"><path d="M0.5 3v10" stroke="#a0a0a0" stroke-dasharray="1 1"/><rect x="3.5" y="3.5" width="12" height="9" fill="#fff" stroke="#a0a0a0"/><path d="M5 8h8M11 6l2 2-2 2" stroke="#a0a0a0" fill="none"/></svg>
<!-- left dock -->
<div style="left:250px;top:111px;width:1px;height:589px;background:#fff"></div>
<!-- panel1 title -->
<div style="left:13px;top:118px;width:204px;height:3px;border-top:1px solid #a0a0a0;border-bottom:1px solid #fff"></div>
<div style="left:13px;top:122px;width:204px;height:3px;border-top:1px solid #a0a0a0;border-bottom:1px solid #fff"></div>
<div style="left:218px;top:113px;width:12px;height:12px;background:#f0f0f0;border-right:1px solid #808080;border-bottom:1px solid #808080;box-shadow:inset 1px 1px #fff"></div>
<svg style="left:221px;top:117px" width="7" height="4" viewBox="0 0 7 4"><path d="M0 4L3.5 0 7 4z" fill="#000"/></svg>
<div style="left:232px;top:113px;width:12px;height:12px;background:#f0f0f0;border-right:1px solid #808080;border-bottom:1px solid #808080;box-shadow:inset 1px 1px #fff"></div>
<svg style="left:234px;top:116px" width="8" height="7" viewBox="0 0 8 7"><path d="M1 0.5l6 6M7 0.5l-6 6" stroke="#000" stroke-width="1.6"/></svg>
<div style="left:12px;top:127px;width:234px;height:1px;background:#a0a0a0"></div>
<div style="left:12px;top:128px;width:234px;height:1px;background:#fff"></div>
<!-- mini toolbar -->
<div style="left:0;top:0;width:0;height:0"><div style="left:14px;top:130px;width:1px;height:1px;background:#a4a4a4"></div><div style="left:15px;top:129px;width:1px;height:1px;background:#cfcfcf"></div><div style="left:15px;top:130px;width:1px;height:1px;background:#a4a4a4"></div><div style="left:18px;top:130px;width:1px;height:1px;background:#c0c0c0"></div><div style="left:19px;top:129px;width:1px;height:1px;background:#dadada"></div><div style="left:19px;top:130px;width:1px;height:1px;background:#c0c0c0"></div><div style="left:14px;top:134px;width:1px;height:1px;background:#a4a4a4"></div><div style="left:15px;top:133px;width:1px;height:1px;background:#cfcfcf"></div><div style="left:15px;top:134px;width:1px;height:1px;background:#a4a4a4"></div><div style="left:18px;top:134px;width:1px;height:1px;background:#c0c0c0"></div><div style="left:19px;top:133px;width:1px;height:1px;background:#dadada"></div><div style="left:19px;top:134px;width:1px;height:1px;background:#c0c0c0"></div><div style="left:14px;top:138px;width:1px;height:1px;background:#a4a4a4"></div><div style="left:15px;top:137px;width:1px;height:1px;background:#cfcfcf"></div><div style="left:15px;top:138px;width:1px;height:1px;background:#a4a4a4"></div><div style="left:18px;top:138px;width:1px;height:1px;background:#c0c0c0"></div><div style="left:19px;top:137px;width:1px;height:1px;background:#dadada"></div><div style="left:19px;top:138px;width:1px;height:1px;background:#c0c0c0"></div><div style="left:14px;top:142px;width:1px;height:1px;background:#a4a4a4"></div><div style="left:15px;top:141px;width:1px;height:1px;background:#cfcfcf"></div><div style="left:15px;top:142px;width:1px;height:1px;background:#a4a4a4"></div><div style="left:18px;top:142px;width:1px;height:1px;background:#c0c0c0"></div><div style="left:19px;top:141px;width:1px;height:1px;background:#dadada"></div><div style="left:19px;top:142px;width:1px;height:1px;background:#c0c0c0"></div><div style="left:14px;top:146px;width:1px;height:1px;background:#a4a4a4"></div><div style="left:15px;top:145px;width:1px;height:1px;background:#cfcfcf"></div><div style="left:15px;top:146px;width:1px;height:1px;background:#a4a4a4"></div><div style="left:18px;top:146px;width:1px;height:1px;background:#c0c0c0"></div><div style="left:19px;top:145px;width:1px;height:1px;background:#dadada"></div><div style="left:19px;top:146px;width:1px;height:1px;background:#c0c0c0"></div><div style="left:14px;top:150px;width:1px;height:1px;background:#a4a4a4"></div><div style="left:15px;top:149px;width:1px;height:1px;background:#cfcfcf"></div><div style="left:15px;top:150px;width:1px;height:1px;background:#a4a4a4"></div><div style="left:18px;top:150px;width:1px;height:1px;background:#c0c0c0"></div><div style="left:19px;top:149px;width:1px;height:1px;background:#dadada"></div><div style="left:19px;top:150px;width:1px;height:1px;background:#c0c0c0"></div><div style="left:14px;top:154px;width:1px;height:1px;background:#a4a4a4"></div><div style="left:15px;top:153px;width:1px;height:1px;background:#cfcfcf"></div><div style="left:15px;top:154px;width:1px;height:1px;background:#a4a4a4"></div><div style="left:18px;top:154px;width:1px;height:1px;background:#c0c0c0"></div><div style="left:19px;top:153px;width:1px;height:1px;background:#dadada"></div><div style="left:19px;top:154px;width:1px;height:1px;background:#c0c0c0"></div></div>
<div style="left:20px;top:131px;width:23px;height:20px;border-radius:3px;background:#d4d4d4;border:1px solid #a8a8a8"></div>
<svg class="ic" style="left:24px;top:134px" viewBox="0 0 16 16"><path d="M1.5 4.5h13v7q0 3-3 3h-7q-3 0-3-3z" fill="#e0e0e0" stroke="#000" stroke-width="2"/><path d="M3 6h10v5.5q0 1.5-1.5 1.5h-7Q3 13 3 11.5z" fill="#d8d8d8" stroke="#fff" stroke-width="1"/><rect x="5.5" y="1.5" width="5" height="2.5" rx="1" fill="#fff" stroke="#000" stroke-width="1.2"/><rect x="13" y="2.5" width="2.5" height="2.5" fill="#f00"/><rect x="13.5" y="5" width="1.5" height="2" fill="#0c0"/></svg>
<svg class="ic" style="left:46px;top:133px" viewBox="0 0 16 16"><path d="M2.5 0.5h8l3 3v12h-11z" fill="#fff" stroke="#000"/><path d="M10.5 0.5v3h3" fill="none" stroke="#000"/><path d="M4 5.5h5" stroke="#0a0"/><path d="M4 8.5h7M4 10.5h7M4 12.5h7" stroke="#000" stroke-width="0.9"/></svg>
<div class="sep" style="left:70px;top:132px;height:19px"></div>
<svg class="ic" style="left:77px;top:133px" width="18" height="16" viewBox="0 0 18 16"><path d="M2 9l6-3V2l6 6-6 4V9z" fill="#a0a0a0"/><circle cx="4" cy="12" r="2.5" fill="none" stroke="#a0a0a0"/><circle cx="10" cy="12" r="2.5" fill="none" stroke="#a0a0a0"/><path d="M12 11l5-4" stroke="#a0a0a0"/></svg>
<div class="sep" style="left:101px;top:132px;height:19px"></div>
<svg class="ic" style="left:108px;top:133px" viewBox="0 0 16 16"><rect x="3.5" y="4.5" width="12" height="11" fill="#fff" stroke="#a0a0a0"/><path d="M6 8h6M6 10h7M6 12h5" stroke="#a0a0a0"/><path d="M1 1l5 5M6 1L1 6" stroke="#a0a0a0" stroke-width="1.6"/></svg>
<div class="sep" style="left:132px;top:132px;height:19px"></div>
<svg class="ic" style="left:140px;top:134px" viewBox="0 0 16 16"><path d="M7 1L1 7h4v3q0 2-1 4h3q2-2 2-5V7h4z" fill="#a0a0a0"/></svg>
<svg class="ic" style="left:163px;top:134px" viewBox="0 0 16 16"><path d="M8 14l6-6h-4V5q0-2 1-4H8Q6 3 6 6v2H2z" fill="#a0a0a0"/></svg>
<!-- tree box -->
<div style="left:11px;top:155px;width:234px;height:243px;background:#fff;border-top:2px solid #6e6e6e;border-left:2px solid #6e6e6e;border-right:1px solid #fff;border-bottom:1px solid #fff"></div>
<div style="left:13px;top:157px;width:231px;height:20px;background:linear-gradient(180deg,#fff 0,#fff 45%,#f7f7f7 50%,#f4f4f4 100%);border-bottom:1px solid #e6e6e6"></div>
<!-- tree items -->
<div style="left:17px;top:180px;width:10px;height:10px;border:1px solid #a9a9a9;background:linear-gradient(180deg,#fff,#e4e4e4)"></div>
<div style="left:19px;top:184px;width:6px;height:1.5px;background:#3a4aa0"></div>
<div style="left:27px;top:185px;width:6px;height:1px;border-top:1px dotted #a0a0a0"></div>
<div style="left:33px;top:178px;width:16px;height:16px;background:#c8c8c8"></div>
<svg class="ic" style="left:33px;top:178px" viewBox="0 0 16 16"><path d="M2.5 0.5h7l4 4v11h-11z" fill="#fff" stroke="#000"/><path d="M9.5 0.5v4h4" fill="none" stroke="#000"/></svg>
<div class="t" style="left:55px;top:180px;transform-origin:0 0;transform:scaleX(.87)">Panel1</div>
<div style="left:41px;top:194px;width:1px;height:4px;border-left:1px dotted #a0a0a0"></div>
<div style="left:37px;top:196px;width:10px;height:10px;border:1px solid #a9a9a9;background:linear-gradient(180deg,#fff,#e4e4e4)"></div>
<div style="left:39px;top:200px;width:6px;height:1.5px;background:#3a4aa0"></div>
<div style="left:47px;top:201px;width:6px;height:1px;border-top:1px dotted #a0a0a0"></div>
<div style="left:53px;top:194px;width:16px;height:16px;background:#c8c8c8"></div>
<svg class="ic" style="left:53px;top:194px" viewBox="0 0 16 16"><path d="M1.5 4.5h13v7q0 3-3 3h-7q-3 0-3-3z" fill="#e0e0e0" stroke="#000" stroke-width="2"/><path d="M3 6h10v5.5q0 1.5-1.5 1.5h-7Q3 13 3 11.5z" fill="#d8d8d8" stroke="#fff" stroke-width="1"/><rect x="5.5" y="1.5" width="5" height="2.5" rx="1" fill="#fff" stroke="#000" stroke-width="1.2"/><rect x="13" y="2.5" width="2.5" height="2.5" fill="#f00"/><rect x="13.5" y="5" width="1.5" height="2" fill="#0c0"/></svg>
<div class="t" style="left:75px;top:196px;transform-origin:0 0;transform:scaleX(.87)">Panel</div>
<div style="left:61px;top:210px;width:1px;height:24px;border-left:1px dotted #a0a0a0"></div>
<div style="left:62px;top:218px;width:11px;height:1px;border-top:1px dotted #a0a0a0"></div>
<div style="left:62px;top:234px;width:11px;height:1px;border-top:1px dotted #a0a0a0"></div>
<div style="left:73px;top:210px;width:16px;height:6px;background:#c8c8c8"></div>
<svg class="ic" style="left:73px;top:210px" viewBox="0 0 16 16"><rect x="1.5" y="6.5" width="13" height="8" fill="#c4c4c4" stroke="#00008c"/><rect x="3.5" y="8.5" width="8" height="4" fill="#dcdcdc" stroke="#fff" stroke-width=".6"/><rect x="1" y="6" width="2" height="2"/><rect x="7" y="6" width="2" height="2"/><rect x="13" y="6" width="2" height="2"/><rect x="1" y="13" width="2" height="2"/><rect x="7" y="13" width="2" height="2"/><rect x="13" y="13" width="2" height="2"/><rect x="1" y="9.5" width="2" height="2"/><rect x="13" y="9.5" width="2" height="2"/></svg>
<div style="left:92px;top:210px;width:26px;height:16px;background:#dadada"></div>
<div class="t" style="left:95px;top:212px;transform-origin:0 0;transform:scaleX(.87)">PB1</div>
<div style="left:73px;top:226px;width:16px;height:6px;background:#c8c8c8"></div>
<svg class="ic" style="left:73px;top:226px" viewBox="0 0 16 16"><rect x="1.5" y="6.5" width="13" height="8" fill="#c4c4c4" stroke="#00008c"/><rect x="3.5" y="8.5" width="8" height="4" fill="#dcdcdc" stroke="#fff" stroke-width=".6"/><rect x="1" y="6" width="2" height="2"/><rect x="7" y="6" width="2" height="2"/><rect x="13" y="6" width="2" height="2"/><rect x="1" y="13" width="2" height="2"/><rect x="7" y="13" width="2" height="2"/><rect x="13" y="13" width="2" height="2"/><rect x="1" y="9.5" width="2" height="2"/><rect x="13" y="9.5" width="2" height="2"/></svg>
<div class="t" style="left:95px;top:228px;transform-origin:0 0;transform:scaleX(.87)">PB2</div>

<!-- dock separator -->
<div style="left:8px;top:406px;width:242px;height:2px;background:#6a6a6a"></div>
<div style="left:8px;top:405px;width:242px;height:1px;background:#fafafa"></div>
<!-- panel2 title -->
<div style="left:13px;top:416px;width:204px;height:3px;border-top:1px solid #a0a0a0;border-bottom:1px solid #fff"></div>
<div style="left:13px;top:420px;width:204px;height:3px;border-top:1px solid #a0a0a0;border-bottom:1px solid #fff"></div>
<div style="left:218px;top:411px;width:12px;height:12px;background:#f0f0f0;border-right:1px solid #808080;border-bottom:1px solid #808080;box-shadow:inset 1px 1px #fff"></div>
<svg style="left:221px;top:415px" width="7" height="4" viewBox="0 0 7 4"><path d="M0 4L3.5 0 7 4z" fill="#000"/></svg>
<div style="left:232px;top:411px;width:12px;height:12px;background:#f0f0f0;border-right:1px solid #808080;border-bottom:1px solid #808080;box-shadow:inset 1px 1px #fff"></div>
<svg style="left:234px;top:414px" width="8" height="7" viewBox="0 0 8 7"><path d="M1 0.5l6 6M7 0.5l-6 6" stroke="#000" stroke-width="1.6"/></svg>
<!-- property grid -->
<div style="left:11px;top:425px;width:234px;height:225px;background:#fff;border:1px solid #a0a0a0;border-bottom:none;border-right:none"></div>
<div style="left:12px;top:426px;width:15px;height:224px;background:#f0f0f0"></div>
<div style="left:111px;top:426px;width:1px;height:224px;background:#a0a0a0"></div>
<div style="left:27px;top:431px;width:200px;height:1px;background:#a0a0a0"></div>
<div style="left:27px;top:452px;width:200px;height:1px;background:#a0a0a0"></div>
<div class="t" style="left:33px;top:437px">Y</div>
<div style="left:116px;top:437px;width:111px;height:14px;overflow:hidden"><div class="t" style="left:0;top:0">260</div></div>
<div style="left:27px;top:473px;width:200px;height:1px;background:#a0a0a0"></div>
<div class="t" style="left:33px;top:458px">Width</div>
<div style="left:116px;top:458px;width:111px;height:14px;overflow:hidden"><div class="t" style="left:0;top:0">140</div></div>
<div style="left:27px;top:494px;width:200px;height:1px;background:#a0a0a0"></div>
<div class="t" style="left:33px;top:479px">Height</div>
<div style="left:116px;top:479px;width:111px;height:14px;overflow:hidden"><div class="t" style="left:0;top:0">50</div></div>
<div style="left:27px;top:515px;width:200px;height:1px;background:#a0a0a0"></div>
<div class="t" style="left:33px;top:500px">FG</div>
<div style="left:116px;top:497px;width:16px;height:15px;background:#000;border:1px solid #808080"></div>
<div style="left:136px;top:500px;width:91px;height:14px;overflow:hidden"><div class="t" style="left:0;top:0">RGB (0, 0, 0)</div></div>
<div style="left:27px;top:536px;width:200px;height:1px;background:#a0a0a0"></div>
<div class="t" style="left:33px;top:521px">BG</div>
<div style="left:116px;top:518px;width:16px;height:15px;background:#b0b0b0;border:1px solid #808080"></div>
<div style="left:136px;top:521px;width:91px;height:14px;overflow:hidden"><div class="t" style="left:0;top:0">RGB (176, 176, 176)</div></div>
<div style="left:27px;top:557px;width:200px;height:1px;background:#a0a0a0"></div>
<div class="t" style="left:33px;top:542px">Group</div>
<div style="left:116px;top:542px;width:111px;height:14px;overflow:hidden"><div class="t" style="left:0;top:0">0</div></div>
<div style="left:27px;top:578px;width:200px;height:1px;background:#a0a0a0"></div>
<div class="t" style="left:33px;top:563px">Active</div>
<div style="left:116px;top:563px;width:111px;height:14px;overflow:hidden"><div class="t" style="left:0;top:0">3 - Visible and Enabled</div></div>
<div style="left:27px;top:599px;width:200px;height:1px;background:#a0a0a0"></div>
<div class="t" style="left:33px;top:584px">Style</div>
<div style="left:116px;top:584px;width:111px;height:14px;overflow:hidden"><div class="t" style="left:0;top:0">1 - Rectangle (3D)</div></div>
<div style="left:27px;top:600px;width:200px;height:20px;background:#f0f0f0"></div>
<div style="left:111px;top:600px;width:1px;height:20px;background:#f0f0f0"></div>
<div style="left:27px;top:620px;width:200px;height:1px;background:#a0a0a0"></div>
<div class="t" style="left:33px;top:604px;font-weight:bold">Misc.</div>
<div style="left:15px;top:605px;width:10px;height:10px;border:1px solid #a0a0a0;background:#fff"></div>
<div style="left:17px;top:609px;width:6px;height:1px;background:#000"></div>
<div class="t" style="left:33px;top:628px">Caption</div>
<div class="t" style="left:116px;top:624px">Top Page</div>
<div style="left:228px;top:426px;width:17px;height:224px;background:linear-gradient(90deg,#e6e6e6,#f4f4f4 40%,#f0f0f0)"></div>
<svg style="left:233px;top:431px" width="9" height="5" viewBox="0 0 9 5"><path d="M0 5L4.5 0 9 5z" fill="#606060"/></svg>
<svg style="left:233px;top:639px" width="9" height="5" viewBox="0 0 9 5"><path d="M0 0L4.5 5 9 0z" fill="#606060"/></svg>
<div style="left:230px;top:481px;width:14px;height:110px;border-radius:2px;border:1px solid #9a9a9a;background:linear-gradient(90deg,#e0e0e0,#fafafa 40%,#dadada)"></div>
<div style="left:233px;top:530px;width:8px;height:7px;border-top:1px solid #606060;border-bottom:1px solid #606060"></div>
<div style="left:233px;top:533px;width:8px;height:1px;background:#606060"></div>
<div style="left:11px;top:650px;width:234px;height:49px;background:#f0f0f0;border-top:1px solid #a0a0a0;border-left:1px solid #a0a0a0"></div>
<div style="left:8px;top:698px;width:242px;height:1px;background:#a0a0a0"></div>
<div style="left:27px;top:426px;width:1px;height:224px;background:#a0a0a0"></div>
<!-- MDI area -->
<div style="left:255px;top:111px;width:691px;height:589px;background:#ababab;border-left:2px solid #696969;border-top:1px solid #696969"></div>
<div style="left:945px;top:111px;width:1px;height:589px;background:#8a8a8a"></div>
<!-- layout window -->
<div style="left:257px;top:113px;width:679px;height:575px;border:1px solid #5f6b78;border-radius:6px 6px 0 0;background:#d9e5f2"></div>
<div style="left:258px;top:114px;width:677px;height:28px;border-radius:5px 5px 0 0;background:linear-gradient(180deg,#bfcedd 0,#cad7e5 50%,#d6e2ee 100%)"></div>
<svg class="ic" style="left:266px;top:121px" viewBox="0 0 16 16"><rect x="1.2" y="4" width="12.5" height="10.8" rx="2.5" fill="#e6e6e6" stroke="#000" stroke-width="1.7"/><rect x="4.5" y="1.5" width="6" height="2.5" rx="1" fill="#fff" stroke="#000" stroke-width="1"/><rect x="12.5" y="2.5" width="2.5" height="2" fill="#f00"/><rect x="13" y="4.5" width="1.5" height="2" fill="#0c0"/></svg>
<div class="t" style="left:286px;top:125px;color:#4a4a62;letter-spacing:-0.25px">Layout - Panel1</div>
<div style="left:829px;top:122px;width:31px;height:17px;border:1px solid #8e9fb3;border-radius:3px;background:linear-gradient(180deg,#d3dfec,#c8d6e6)"></div>
<div style="left:862px;top:122px;width:31px;height:17px;border:1px solid #8e9fb3;border-radius:3px;background:linear-gradient(180deg,#d3dfec,#c8d6e6)"></div>
<div style="left:895px;top:122px;width:32px;height:17px;border:1px solid #8e9fb3;border-radius:3px;background:linear-gradient(180deg,#d3dfec,#c8d6e6)"></div>
<div style="left:839px;top:130px;width:11px;height:5px;background:#f4f4f4;border:1px solid #444;border-radius:1px"></div>
<div style="left:872px;top:126px;width:11px;height:9px;border:3px solid #f4f4f4;box-shadow:0 0 0 1px #444, inset 0 0 0 1px #444"></div>
<svg style="left:904px;top:125px" width="13" height="11" viewBox="0 0 13 11"><path d="M3 2L10 9M10 2L3 9" stroke="#444" stroke-width="4.8" stroke-linecap="square"/><path d="M3 2L10 9M10 2L3 9" stroke="#f4f4f4" stroke-width="2.8" stroke-linecap="square"/></svg>
<!-- layout client -->
<div style="left:264px;top:142px;width:664px;height:537px;background:#f0f0f0;border-left:1px solid #a4aeb8;border-bottom:1px solid #fff"></div>
<div style="left:0;top:0;width:0;height:0"><div style="left:268px;top:147px;width:1px;height:1px;background:#a4a4a4"></div><div style="left:269px;top:146px;width:1px;height:1px;background:#cfcfcf"></div><div style="left:269px;top:147px;width:1px;height:1px;background:#a4a4a4"></div><div style="left:272px;top:147px;width:1px;height:1px;background:#c0c0c0"></div><div style="left:273px;top:146px;width:1px;height:1px;background:#dadada"></div><div style="left:273px;top:147px;width:1px;height:1px;background:#c0c0c0"></div><div style="left:268px;top:151px;width:1px;height:1px;background:#a4a4a4"></div><div style="left:269px;top:150px;width:1px;height:1px;background:#cfcfcf"></div><div style="left:269px;top:151px;width:1px;height:1px;background:#a4a4a4"></div><div style="left:272px;top:151px;width:1px;height:1px;background:#c0c0c0"></div><div style="left:273px;top:150px;width:1px;height:1px;background:#dadada"></div><div style="left:273px;top:151px;width:1px;height:1px;background:#c0c0c0"></div><div style="left:268px;top:155px;width:1px;height:1px;background:#a4a4a4"></div><div style="left:269px;top:154px;width:1px;height:1px;background:#cfcfcf"></div><div style="left:269px;top:155px;width:1px;height:1px;background:#a4a4a4"></div><div style="left:272px;top:155px;width:1px;height:1px;background:#c0c0c0"></div><div style="left:273px;top:154px;width:1px;height:1px;background:#dadada"></div><div style="left:273px;top:155px;width:1px;height:1px;background:#c0c0c0"></div><div style="left:268px;top:159px;width:1px;height:1px;background:#a4a4a4"></div><div style="left:269px;top:158px;width:1px;height:1px;background:#cfcfcf"></div><div style="left:269px;top:159px;width:1px;height:1px;background:#a4a4a4"></div><div style="left:272px;top:159px;width:1px;height:1px;background:#c0c0c0"></div><div style="left:273px;top:158px;width:1px;height:1px;background:#dadada"></div><div style="left:273px;top:159px;width:1px;height:1px;background:#c0c0c0"></div><div style="left:268px;top:163px;width:1px;height:1px;background:#a4a4a4"></div><div style="left:269px;top:162px;width:1px;height:1px;background:#cfcfcf"></div><div style="left:269px;top:163px;width:1px;height:1px;background:#a4a4a4"></div><div style="left:272px;top:163px;width:1px;height:1px;background:#c0c0c0"></div><div style="left:273px;top:162px;width:1px;height:1px;background:#dadada"></div><div style="left:273px;top:163px;width:1px;height:1px;background:#c0c0c0"></div><div style="left:268px;top:167px;width:1px;height:1px;background:#a4a4a4"></div><div style="left:269px;top:166px;width:1px;height:1px;background:#cfcfcf"></div><div style="left:269px;top:167px;width:1px;height:1px;background:#a4a4a4"></div><div style="left:272px;top:167px;width:1px;height:1px;background:#c0c0c0"></div><div style="left:273px;top:166px;width:1px;height:1px;background:#dadada"></div><div style="left:273px;top:167px;width:1px;height:1px;background:#c0c0c0"></div><div style="left:268px;top:171px;width:1px;height:1px;background:#a4a4a4"></div><div style="left:269px;top:170px;width:1px;height:1px;background:#cfcfcf"></div><div style="left:269px;top:171px;width:1px;height:1px;background:#a4a4a4"></div><div style="left:272px;top:171px;width:1px;height:1px;background:#c0c0c0"></div><div style="left:273px;top:170px;width:1px;height:1px;background:#dadada"></div><div style="left:273px;top:171px;width:1px;height:1px;background:#c0c0c0"></div></div>
<div style="left:265px;top:142px;width:17px;height:1px;background:#a0a0a0"></div><div style="left:265px;top:143px;width:17px;height:1px;background:#fff"></div>
<svg style="left:276px;top:149px" width="6" height="15" viewBox="0 0 6 15"><path d="M2.5 0.5h4v14h-4z" fill="#fff" stroke="#000"/><rect x="4" y="5" width="2" height="1" fill="#0a0"/></svg>
<div style="left:265px;top:172px;width:663px;height:2px;background:#202020"></div>
<div style="left:265px;top:174px;width:661px;height:504px;background:#606060"></div>
<div style="left:266px;top:174px;width:18px;height:504px;background:#c0c0c0;border-left:1px solid #000;border-right:1px solid #000"></div>
<div style="left:266px;top:173px;width:660px;height:18px;background:#c0c0c0;border-top:1px solid #000;border-bottom:1px solid #000"></div>
<div style="left:266px;top:173px;width:18px;height:18px;background:#c0c0c0;border:1px solid #000;border-top:none"></div>
<div style="left:924px;top:174px;width:3px;height:16px;background:#dcdcdc"></div>
<div style="left:293px;top:188px;width:1px;height:2px;background:#000"></div><div style="left:303px;top:186px;width:1px;height:4px;background:#000"></div><div style="left:313px;top:188px;width:1px;height:2px;background:#000"></div><div style="left:323px;top:184px;width:1px;height:6px;background:#000"></div><div class="t" style="left:326px;top:176px;font-size:10px;color:#1b2240">40</div><div style="left:333px;top:188px;width:1px;height:2px;background:#000"></div><div style="left:343px;top:186px;width:1px;height:4px;background:#000"></div><div style="left:353px;top:188px;width:1px;height:2px;background:#000"></div><div style="left:363px;top:174px;width:1px;height:16px;background:#000"></div><div style="left:363px;top:184px;width:1px;height:6px;background:#000"></div><div class="t" style="left:366px;top:176px;font-size:10px;color:#1b2240">80</div><div style="left:373px;top:188px;width:1px;height:2px;background:#000"></div><div style="left:383px;top:186px;width:1px;height:4px;background:#000"></div><div style="left:393px;top:188px;width:1px;height:2px;background:#000"></div><div style="left:403px;top:184px;width:1px;height:6px;background:#000"></div><div class="t" style="left:406px;top:176px;font-size:10px;color:#1b2240">120</div><div style="left:413px;top:188px;width:1px;height:2px;background:#000"></div><div style="left:423px;top:186px;width:1px;height:4px;background:#000"></div><div style="left:433px;top:188px;width:1px;height:2px;background:#000"></div><div style="left:443px;top:174px;width:1px;height:16px;background:#000"></div><div style="left:443px;top:184px;width:1px;height:6px;background:#000"></div><div class="t" style="left:446px;top:176px;font-size:10px;color:#1b2240">160</div><div style="left:453px;top:188px;width:1px;height:2px;background:#000"></div><div style="left:463px;top:186px;width:1px;height:4px;background:#000"></div><div style="left:473px;top:188px;width:1px;height:2px;background:#000"></div><div style="left:483px;top:184px;width:1px;height:6px;background:#000"></div><div class="t" style="left:486px;top:176px;font-size:10px;color:#1b2240">200</div><div style="left:493px;top:188px;width:1px;height:2px;background:#000"></div><div style="left:503px;top:186px;width:1px;height:4px;background:#000"></div><div style="left:513px;top:188px;width:1px;height:2px;background:#000"></div><div style="left:523px;top:174px;width:1px;height:16px;background:#000"></div><div style="left:523px;top:184px;width:1px;height:6px;background:#000"></div><div class="t" style="left:526px;top:176px;font-size:10px;color:#1b2240">240</div><div style="left:533px;top:188px;width:1px;height:2px;background:#000"></div><div style="left:543px;top:186px;width:1px;height:4px;background:#000"></div><div style="left:553px;top:188px;width:1px;height:2px;background:#000"></div><div style="left:563px;top:184px;width:1px;height:6px;background:#000"></div><div class="t" style="left:566px;top:176px;font-size:10px;color:#1b2240">280</div><div style="left:573px;top:188px;width:1px;height:2px;background:#000"></div><div style="left:583px;top:186px;width:1px;height:4px;background:#000"></div><div style="left:593px;top:188px;width:1px;height:2px;background:#000"></div><div style="left:603px;top:174px;width:1px;height:16px;background:#000"></div><div style="left:603px;top:184px;width:1px;height:6px;background:#000"></div><div class="t" style="left:606px;top:176px;font-size:10px;color:#1b2240">320</div><div style="left:613px;top:188px;width:1px;height:2px;background:#000"></div><div style="left:623px;top:186px;width:1px;height:4px;background:#000"></div><div style="left:633px;top:188px;width:1px;height:2px;background:#000"></div><div style="left:643px;top:184px;width:1px;height:6px;background:#000"></div><div class="t" style="left:646px;top:176px;font-size:10px;color:#1b2240">360</div><div style="left:653px;top:188px;width:1px;height:2px;background:#000"></div><div style="left:663px;top:186px;width:1px;height:4px;background:#000"></div><div style="left:673px;top:188px;width:1px;height:2px;background:#000"></div><div style="left:683px;top:174px;width:1px;height:16px;background:#000"></div><div style="left:683px;top:184px;width:1px;height:6px;background:#000"></div><div class="t" style="left:686px;top:176px;font-size:10px;color:#1b2240">400</div><div style="left:693px;top:188px;width:1px;height:2px;background:#000"></div><div style="left:703px;top:186px;width:1px;height:4px;background:#000"></div><div style="left:713px;top:188px;width:1px;height:2px;background:#000"></div><div style="left:723px;top:184px;width:1px;height:6px;background:#000"></div><div class="t" style="left:726px;top:176px;font-size:10px;color:#1b2240">440</div><div style="left:733px;top:188px;width:1px;height:2px;background:#000"></div><div style="left:743px;top:186px;width:1px;height:4px;background:#000"></div><div style="left:753px;top:188px;width:1px;height:2px;background:#000"></div><div style="left:763px;top:174px;width:1px;height:16px;background:#000"></div><div style="left:763px;top:184px;width:1px;height:6px;background:#000"></div><div class="t" style="left:766px;top:176px;font-size:10px;color:#1b2240">480</div><div style="left:773px;top:188px;width:1px;height:2px;background:#000"></div><div style="left:783px;top:186px;width:1px;height:4px;background:#000"></div><div style="left:793px;top:188px;width:1px;height:2px;background:#000"></div><div style="left:803px;top:184px;width:1px;height:6px;background:#000"></div><div class="t" style="left:806px;top:176px;font-size:10px;color:#1b2240">520</div><div style="left:813px;top:188px;width:1px;height:2px;background:#000"></div><div style="left:823px;top:186px;width:1px;height:4px;background:#000"></div><div style="left:833px;top:188px;width:1px;height:2px;background:#000"></div><div style="left:843px;top:174px;width:1px;height:16px;background:#000"></div><div style="left:843px;top:184px;width:1px;height:6px;background:#000"></div><div class="t" style="left:846px;top:176px;font-size:10px;color:#1b2240">560</div><div style="left:853px;top:188px;width:1px;height:2px;background:#000"></div><div style="left:863px;top:186px;width:1px;height:4px;background:#000"></div><div style="left:873px;top:188px;width:1px;height:2px;background:#000"></div><div style="left:883px;top:184px;width:1px;height:6px;background:#000"></div><div class="t" style="left:886px;top:176px;font-size:10px;color:#1b2240">600</div><div style="left:893px;top:188px;width:1px;height:2px;background:#000"></div><div style="left:903px;top:186px;width:1px;height:4px;background:#000"></div><div style="left:913px;top:188px;width:1px;height:2px;background:#000"></div>
<div style="left:277px;top:200px;width:6px;height:1px;background:#000"></div><div class="t" style="left:269px;top:217.4px;font-size:10px;color:#1b2240;transform-origin:0 0;transform:rotate(-90deg)">-40</div><div style="left:281px;top:210px;width:2px;height:1px;background:#000"></div><div style="left:279px;top:220px;width:4px;height:1px;background:#000"></div><div style="left:281px;top:230px;width:2px;height:1px;background:#000"></div><div style="left:267px;top:240px;width:16px;height:1px;background:#000"></div><div style="left:277px;top:240px;width:6px;height:1px;background:#000"></div><div class="t" style="left:269px;top:248.6px;font-size:10px;color:#1b2240;transform-origin:0 0;transform:rotate(-90deg)">0</div><div style="left:281px;top:250px;width:2px;height:1px;background:#000"></div><div style="left:279px;top:260px;width:4px;height:1px;background:#000"></div><div style="left:281px;top:270px;width:2px;height:1px;background:#000"></div><div style="left:277px;top:280px;width:6px;height:1px;background:#000"></div><div class="t" style="left:269px;top:294.1px;font-size:10px;color:#1b2240;transform-origin:0 0;transform:rotate(-90deg)">40</div><div style="left:281px;top:290px;width:2px;height:1px;background:#000"></div><div style="left:279px;top:300px;width:4px;height:1px;background:#000"></div><div style="left:281px;top:310px;width:2px;height:1px;background:#000"></div><div style="left:267px;top:320px;width:16px;height:1px;background:#000"></div><div style="left:277px;top:320px;width:6px;height:1px;background:#000"></div><div class="t" style="left:269px;top:334.1px;font-size:10px;color:#1b2240;transform-origin:0 0;transform:rotate(-90deg)">80</div><div style="left:281px;top:330px;width:2px;height:1px;background:#000"></div><div style="left:279px;top:340px;width:4px;height:1px;background:#000"></div><div style="left:281px;top:350px;width:2px;height:1px;background:#000"></div><div style="left:277px;top:360px;width:6px;height:1px;background:#000"></div><div class="t" style="left:269px;top:379.7px;font-size:10px;color:#1b2240;transform-origin:0 0;transform:rotate(-90deg)">120</div><div style="left:281px;top:370px;width:2px;height:1px;background:#000"></div><div style="left:279px;top:380px;width:4px;height:1px;background:#000"></div><div style="left:281px;top:390px;width:2px;height:1px;background:#000"></div><div style="left:267px;top:400px;width:16px;height:1px;background:#000"></div><div style="left:277px;top:400px;width:6px;height:1px;background:#000"></div><div class="t" style="left:269px;top:419.7px;font-size:10px;color:#1b2240;transform-origin:0 0;transform:rotate(-90deg)">160</div><div style="left:281px;top:410px;width:2px;height:1px;background:#000"></div><div style="left:279px;top:420px;width:4px;height:1px;background:#000"></div><div style="left:281px;top:430px;width:2px;height:1px;background:#000"></div><div style="left:277px;top:440px;width:6px;height:1px;background:#000"></div><div class="t" style="left:269px;top:459.7px;font-size:10px;color:#1b2240;transform-origin:0 0;transform:rotate(-90deg)">200</div><div style="left:281px;top:450px;width:2px;height:1px;background:#000"></div><div style="left:279px;top:460px;width:4px;height:1px;background:#000"></div><div style="left:281px;top:470px;width:2px;height:1px;background:#000"></div><div style="left:267px;top:480px;width:16px;height:1px;background:#000"></div><div style="left:277px;top:480px;width:6px;height:1px;background:#000"></div><div class="t" style="left:269px;top:499.7px;font-size:10px;color:#1b2240;transform-origin:0 0;transform:rotate(-90deg)">240</div><div style="left:281px;top:490px;width:2px;height:1px;background:#000"></div><div style="left:279px;top:500px;width:4px;height:1px;background:#000"></div><div style="left:281px;top:510px;width:2px;height:1px;background:#000"></div><div style="left:277px;top:520px;width:6px;height:1px;background:#000"></div><div class="t" style="left:269px;top:539.7px;font-size:10px;color:#1b2240;transform-origin:0 0;transform:rotate(-90deg)">280</div><div style="left:281px;top:530px;width:2px;height:1px;background:#000"></div><div style="left:279px;top:540px;width:4px;height:1px;background:#000"></div><div style="left:281px;top:550px;width:2px;height:1px;background:#000"></div><div style="left:267px;top:560px;width:16px;height:1px;background:#000"></div><div style="left:277px;top:560px;width:6px;height:1px;background:#000"></div><div class="t" style="left:269px;top:579.7px;font-size:10px;color:#1b2240;transform-origin:0 0;transform:rotate(-90deg)">320</div><div style="left:281px;top:570px;width:2px;height:1px;background:#000"></div><div style="left:279px;top:580px;width:4px;height:1px;background:#000"></div><div style="left:281px;top:590px;width:2px;height:1px;background:#000"></div><div style="left:277px;top:600px;width:6px;height:1px;background:#000"></div><div class="t" style="left:269px;top:619.7px;font-size:10px;color:#1b2240;transform-origin:0 0;transform:rotate(-90deg)">360</div><div style="left:281px;top:610px;width:2px;height:1px;background:#000"></div><div style="left:279px;top:620px;width:4px;height:1px;background:#000"></div><div style="left:281px;top:630px;width:2px;height:1px;background:#000"></div><div style="left:267px;top:640px;width:16px;height:1px;background:#000"></div><div style="left:277px;top:640px;width:6px;height:1px;background:#000"></div><div class="t" style="left:269px;top:659.7px;font-size:10px;color:#1b2240;transform-origin:0 0;transform:rotate(-90deg)">400</div><div style="left:281px;top:650px;width:2px;height:1px;background:#000"></div><div style="left:279px;top:660px;width:4px;height:1px;background:#000"></div><div style="left:281px;top:670px;width:2px;height:1px;background:#000"></div>
<div style="left:265px;top:245px;width:18px;height:1px;background:#fff"></div>
<div style="left:284px;top:191px;width:642px;height:487px;background:#606060"></div>
<div style="left:922px;top:191px;width:4px;height:487px;background:#6a6a6a"></div>
<svg style="left:284px;top:240px" width="639" height="365"><defs><pattern id="dots" x="-1" y="0" width="10" height="10" patternUnits="userSpaceOnUse"><rect x="0" y="0" width="1" height="1" fill="#cbbd92"/></pattern></defs><rect width="639" height="365" fill="#384a72"/><rect width="639" height="365" fill="url(#dots)"/></svg>
<div class="t" style="left:853px;top:209px;font-size:13px;color:#fff;transform-origin:0 0;transform:scaleX(.8)">1&nbsp; %</div>
<div style="left:812px;top:225px;width:105px;height:9px;background:#e9e7ec"></div>
<div style="left:813px;top:227px;width:1px;height:5px;background:#3070d0"></div>
<div style="left:780px;top:201px;width:25px;height:35px;border:2px solid #1a4478;border-radius:4px;background:linear-gradient(180deg,#f8f8f8,#c8c8cc)"></div>
<div style="left:443px;top:500px;width:141px;height:51px;background:#b0b0b0;border-top:2px solid #fff;border-left:2px solid #fff;box-shadow:1px 1px 0 #000"></div>
<div class="t" style="left:443px;top:518px;width:141px;text-align:center;font-size:14.5px;color:#141414">Top Page</div>
<div style="left:633px;top:500px;width:150px;height:51px;background:#b0b0b0;border-top:2px solid #fff;border-left:2px solid #fff;border-right:1px solid #404040;border-bottom:1px solid #404040;box-shadow:1px 1px 0 #000"></div>
<div class="t" style="left:633px;top:518px;width:150px;text-align:center;font-size:14.5px;color:#141414">Panel1 (Folder1)</div>
<div style="left:439px;top:496px;width:8px;height:8px;background:#000;border:1px solid #fff"></div>
<div style="left:509px;top:496px;width:8px;height:8px;background:#000;border:1px solid #fff"></div>
<div style="left:580px;top:496px;width:8px;height:8px;background:#000;border:1px solid #fff"></div>
<div style="left:439px;top:521px;width:8px;height:8px;background:#000;border:1px solid #fff"></div>
<div style="left:580px;top:521px;width:8px;height:8px;background:#000;border:1px solid #fff"></div>
<div style="left:439px;top:546px;width:8px;height:8px;background:#000;border:1px solid #fff"></div>
<div style="left:509px;top:546px;width:8px;height:8px;background:#000;border:1px solid #fff"></div>
<div style="left:580px;top:546px;width:8px;height:8px;background:#000;border:1px solid #fff"></div>
<div style="left:834px;top:609px;width:86px;height:24px;border:1px solid #1d4a80;border-radius:12px;box-shadow:inset 0 0 0 1px #c8d4e4;background:linear-gradient(180deg,#fff 0,#f6f6fa 50%,#dcdae6 100%)"></div>
<svg style="left:845px;top:616px" width="12" height="12" viewBox="0 0 12 12"><rect x="0.5" y="0.5" width="11" height="11" fill="#f4f4f4" stroke="#808080"/><path d="M2.5 9.5L8 4" stroke="#707070" stroke-width="2"/><path d="M5 3h5v5z" fill="#707070"/></svg>
<div class="t" style="left:862px;top:616px;font-size:12px;color:#111">Shotcut</div>
<div style="left:286px;top:637px;width:82px;height:36px;border:1px solid #17457a;border-radius:4px;box-shadow:inset 0 0 0 1px #fff;background:linear-gradient(180deg,#fbfbfb 0,#ececec 40%,#c8c7cc 100%)"></div>
<div style="left:373px;top:637px;width:89px;height:36px;border:1px solid #17457a;border-radius:4px;box-shadow:inset 0 0 0 1px #fff;background:linear-gradient(180deg,#fbfbfb 0,#ececec 40%,#c8c7cc 100%)"></div>
<div style="left:465px;top:637px;width:89px;height:36px;border:1px solid #17457a;border-radius:4px;box-shadow:inset 0 0 0 1px #fff;background:linear-gradient(180deg,#fbfbfb 0,#ececec 40%,#c8c7cc 100%)"></div>
<div style="left:557px;top:637px;width:89px;height:36px;border:1px solid #17457a;border-radius:4px;box-shadow:inset 0 0 0 1px #fff;background:linear-gradient(180deg,#fbfbfb 0,#ececec 40%,#c8c7cc 100%)"></div>
<div style="left:649px;top:637px;width:89px;height:36px;border:1px solid #17457a;border-radius:4px;box-shadow:inset 0 0 0 1px #fff;background:linear-gradient(180deg,#fbfbfb 0,#ececec 40%,#c8c7cc 100%)"></div>
<div style="left:741px;top:637px;width:89px;height:36px;border:1px solid #17457a;border-radius:4px;box-shadow:inset 0 0 0 1px #fff;background:linear-gradient(180deg,#fbfbfb 0,#ececec 40%,#c8c7cc 100%)"></div>
<div style="left:833px;top:637px;width:89px;height:36px;border:1px solid #17457a;border-radius:4px;box-shadow:inset 0 0 0 1px #fff;background:linear-gradient(180deg,#fbfbfb 0,#ececec 40%,#c8c7cc 100%)"></div>
<div style="left:321px;top:643px;width:11px;height:11px;border-radius:50%;background:radial-gradient(circle at 40% 35%,#b0b0b0,#6a6a6a 70%)"></div>
<div class="t" style="left:310px;top:657px;font-size:12px;color:#111;letter-spacing:0.4px">SHIFT</div>
<!-- source window -->
<div style="left:281px;top:137px;width:513px;height:260px;border:1px solid #25313d;border-radius:6px 6px 0 0;background:#b9d1ea;box-shadow:inset 0 -1px #5fd5f5, inset -1px 0 #5fd5f5"></div>
<div style="left:282px;top:138px;width:511px;height:29px;border-radius:5px 5px 0 0;background:linear-gradient(180deg,#9ab4d0 0,#a6bfda 50%,#b8cfe6 100%)"></div>
<svg class="ic" style="left:290px;top:147px" viewBox="0 0 16 16"><path d="M2.5 1.5h8l3 3v11h-11z" fill="#fff" stroke="#555"/><path d="M5 6.5h6" stroke="#0b0"/><path d="M4 9.5h8M4 11.5h8" stroke="#444" stroke-width=".7"/></svg>
<div class="t" style="left:311px;top:151px;color:#000;letter-spacing:-0.35px">Source - Panel1</div>
<div style="left:687px;top:147px;width:31px;height:17px;border:1px solid #52698a;border-radius:3px;background:linear-gradient(180deg,#cddcec 0,#b7cce2 50%,#8eaac8 52%,#a7bfd9 100%)"></div>
<div style="left:720px;top:147px;width:31px;height:17px;border:1px solid #52698a;border-radius:3px;background:linear-gradient(180deg,#cddcec 0,#b7cce2 50%,#8eaac8 52%,#a7bfd9 100%)"></div>
<div style="left:753px;top:147px;width:31px;height:17px;border:1px solid #4a1a1a;border-radius:3px;background:linear-gradient(180deg,#eaa898 0,#dc8a77 48%,#c2432a 52%,#d06a50 100%)"></div>
<div style="left:697px;top:155px;width:11px;height:5px;background:#f4f4f4;border:1px solid #333;border-radius:1px"></div>
<div style="left:730px;top:151px;width:11px;height:9px;border:3px solid #f4f4f4;box-shadow:0 0 0 1px #333, inset 0 0 0 1px #333"></div>
<svg style="left:762px;top:150px" width="13" height="11" viewBox="0 0 13 11"><path d="M3 2L10 9M10 2L3 9" stroke="#333" stroke-width="4.8" stroke-linecap="square"/><path d="M3 2L10 9M10 2L3 9" stroke="#fff" stroke-width="2.8" stroke-linecap="square"/></svg>
<!-- source client -->
<div style="left:289px;top:167px;width:497px;height:222px;background:#f0f0f0"></div>
<div style="left:0;top:0;width:0;height:0"><div style="left:292px;top:172px;width:1px;height:1px;background:#a4a4a4"></div><div style="left:293px;top:171px;width:1px;height:1px;background:#cfcfcf"></div><div style="left:293px;top:172px;width:1px;height:1px;background:#a4a4a4"></div><div style="left:296px;top:172px;width:1px;height:1px;background:#c0c0c0"></div><div style="left:297px;top:171px;width:1px;height:1px;background:#dadada"></div><div style="left:297px;top:172px;width:1px;height:1px;background:#c0c0c0"></div><div style="left:292px;top:176px;width:1px;height:1px;background:#a4a4a4"></div><div style="left:293px;top:175px;width:1px;height:1px;background:#cfcfcf"></div><div style="left:293px;top:176px;width:1px;height:1px;background:#a4a4a4"></div><div style="left:296px;top:176px;width:1px;height:1px;background:#c0c0c0"></div><div style="left:297px;top:175px;width:1px;height:1px;background:#dadada"></div><div style="left:297px;top:176px;width:1px;height:1px;background:#c0c0c0"></div><div style="left:292px;top:180px;width:1px;height:1px;background:#a4a4a4"></div><div style="left:293px;top:179px;width:1px;height:1px;background:#cfcfcf"></div><div style="left:293px;top:180px;width:1px;height:1px;background:#a4a4a4"></div><div style="left:296px;top:180px;width:1px;height:1px;background:#c0c0c0"></div><div style="left:297px;top:179px;width:1px;height:1px;background:#dadada"></div><div style="left:297px;top:180px;width:1px;height:1px;background:#c0c0c0"></div><div style="left:292px;top:184px;width:1px;height:1px;background:#a4a4a4"></div><div style="left:293px;top:183px;width:1px;height:1px;background:#cfcfcf"></div><div style="left:293px;top:184px;width:1px;height:1px;background:#a4a4a4"></div><div style="left:296px;top:184px;width:1px;height:1px;background:#c0c0c0"></div><div style="left:297px;top:183px;width:1px;height:1px;background:#dadada"></div><div style="left:297px;top:184px;width:1px;height:1px;background:#c0c0c0"></div><div style="left:292px;top:188px;width:1px;height:1px;background:#a4a4a4"></div><div style="left:293px;top:187px;width:1px;height:1px;background:#cfcfcf"></div><div style="left:293px;top:188px;width:1px;height:1px;background:#a4a4a4"></div><div style="left:296px;top:188px;width:1px;height:1px;background:#c0c0c0"></div><div style="left:297px;top:187px;width:1px;height:1px;background:#dadada"></div><div style="left:297px;top:188px;width:1px;height:1px;background:#c0c0c0"></div><div style="left:292px;top:192px;width:1px;height:1px;background:#a4a4a4"></div><div style="left:293px;top:191px;width:1px;height:1px;background:#cfcfcf"></div><div style="left:293px;top:192px;width:1px;height:1px;background:#a4a4a4"></div><div style="left:296px;top:192px;width:1px;height:1px;background:#c0c0c0"></div><div style="left:297px;top:191px;width:1px;height:1px;background:#dadada"></div><div style="left:297px;top:192px;width:1px;height:1px;background:#c0c0c0"></div><div style="left:292px;top:196px;width:1px;height:1px;background:#a4a4a4"></div><div style="left:293px;top:195px;width:1px;height:1px;background:#cfcfcf"></div><div style="left:293px;top:196px;width:1px;height:1px;background:#a4a4a4"></div><div style="left:296px;top:196px;width:1px;height:1px;background:#c0c0c0"></div><div style="left:297px;top:195px;width:1px;height:1px;background:#dadada"></div><div style="left:297px;top:196px;width:1px;height:1px;background:#c0c0c0"></div></div>
<svg class="ic" style="left:300px;top:174px" viewBox="0 0 16 16"><path d="M1.5 4.5h13v7q0 3-3 3h-7q-3 0-3-3z" fill="#e0e0e0" stroke="#000" stroke-width="2"/><path d="M3 6h10v5.5q0 1.5-1.5 1.5h-7Q3 13 3 11.5z" fill="#d8d8d8" stroke="#fff" stroke-width="1"/><rect x="5.5" y="1.5" width="5" height="2.5" rx="1" fill="#fff" stroke="#000" stroke-width="1.2"/><rect x="13" y="2.5" width="2.5" height="2.5" fill="#f00"/><rect x="13.5" y="5" width="1.5" height="2" fill="#0c0"/></svg>
<div class="sep" style="left:324px;top:171px;height:23px"></div>
<div style="left:329px;top:170px;width:201px;height:24px;border:1px solid #7a7a7a;border-radius:3px;background:linear-gradient(180deg,#f4f4f4 0,#ececec 45%,#dcdcdc 55%,#d6d6d6 100%)"></div>
<div class="t" style="left:333px;top:176px;font-size:13px;font-weight:bold;color:#000">PB1</div>
<svg style="left:516px;top:180px" width="9" height="5" viewBox="0 0 9 5"><path d="M0 0L4.5 5 9 0z" fill="#000"/></svg>
<div class="sep" style="left:532px;top:171px;height:23px"></div>
<div style="left:537px;top:170px;width:200px;height:24px;border:1px solid #7a7a7a;border-radius:3px;background:linear-gradient(180deg,#f4f4f4 0,#ececec 45%,#dcdcdc 55%,#d6d6d6 100%)"></div>
<div class="t" style="left:541px;top:176px;font-size:13px;font-weight:bold;color:#000">CLICKED</div>
<svg style="left:723px;top:180px" width="9" height="5" viewBox="0 0 9 5"><path d="M0 0L4.5 5 9 0z" fill="#000"/></svg>
<div class="sep" style="left:741px;top:171px;height:23px"></div>
<svg class="ic" style="left:747px;top:174px" viewBox="0 0 16 16"><path d="M0 3.5h4M0 12.5h4M1 8h5" stroke="#a8a8a8"/><path d="M4 6l2 2-2 2" stroke="#a8a8a8" fill="none"/><path d="M7.5 1v15" stroke="#a8a8a8" stroke-dasharray="1 1"/><path d="M8 3.5h8M9 6.5h6M9 9.5h6M8 12.5h8" stroke="#a8a8a8"/></svg><div style="left:769px;top:174px;width:17px;height:16px;overflow:hidden"><svg class="ic" style="left:0;top:0" viewBox="0 0 16 16"><path d="M0 3.5h4M0 12.5h4M1 8h5" stroke="#a8a8a8"/><path d="M3 6l-2 2 2 2" stroke="#a8a8a8" fill="none"/><path d="M7.5 1v15" stroke="#a8a8a8" stroke-dasharray="1 1"/><path d="M8 3.5h8M9 6.5h6M9 9.5h6M8 12.5h8" stroke="#a8a8a8"/></svg></div>
<!-- editor -->
<div style="left:290px;top:196px;width:496px;height:193px;background:#fff;border-top:2px solid #6a6a6a;border-left:2px solid #6a6a6a"></div>
<div style="left:292px;top:198px;width:59px;height:172px;background:#f0f0f0"></div>
<div class="t" style="left:311px;top:200px;font-size:10.5px;color:#1f6fdc">00001</div>
<div class="t" style="left:352px;top:201px;font-family:'Liberation Mono',monospace;font-weight:bold;font-size:12.5px;letter-spacing:0.5px;color:#000;white-space:pre"><span style="color:#e00">#</span><span style="color:#00f">include</span> <span style="color:#e00">&lt;</span>PanelMain.h<span style="color:#e00">&gt;</span> raw</div>
<div class="t" style="left:311px;top:215px;font-size:10.5px;color:#1f6fdc">00002</div>
<div class="t" style="left:311px;top:230px;font-size:10.5px;color:#1f6fdc">00003</div>
<div class="t" style="left:352px;top:231px;font-family:'Liberation Mono',monospace;font-weight:bold;font-size:12.5px;letter-spacing:0.5px;color:#000;white-space:pre"><span style="color:#00f">Sub</span> PB1_CLICKED()</div>
<div class="t" style="left:311px;top:245px;font-size:10.5px;color:#1f6fdc">00004</div>
<div class="t" style="left:352px;top:246px;font-family:'Liberation Mono',monospace;font-weight:bold;font-size:12.5px;letter-spacing:0.5px;color:#000;white-space:pre">    <span style="color:#00f">PageChange</span> ..<span style="color:#e00">\</span>..<span style="color:#e00">\</span>Main</div>
<div class="t" style="left:311px;top:260px;font-size:10.5px;color:#1f6fdc">00005</div>
<div class="t" style="left:352px;top:261px;font-family:'Liberation Mono',monospace;font-weight:bold;font-size:12.5px;letter-spacing:0.5px;color:#000;white-space:pre"><span style="color:#00f">End Sub</span></div>
<div class="t" style="left:311px;top:275px;font-size:10.5px;color:#1f6fdc">00006</div>
<div class="t" style="left:311px;top:290px;font-size:10.5px;color:#1f6fdc">00007</div>
<div class="t" style="left:352px;top:291px;font-family:'Liberation Mono',monospace;font-weight:bold;font-size:12.5px;letter-spacing:0.5px;color:#000;white-space:pre"><span style="color:#00f">Sub</span> PB2_CLICKED()</div>
<div class="t" style="left:311px;top:305px;font-size:10.5px;color:#1f6fdc">00008</div>
<div class="t" style="left:352px;top:306px;font-family:'Liberation Mono',monospace;font-weight:bold;font-size:12.5px;letter-spacing:0.5px;color:#000;white-space:pre">    <span style="color:#00f">PageChange</span> ..<span style="color:#e00">\</span>Panel1</div>
<div class="t" style="left:311px;top:320px;font-size:10.5px;color:#1f6fdc">00009</div>
<div class="t" style="left:352px;top:321px;font-family:'Liberation Mono',monospace;font-weight:bold;font-size:12.5px;letter-spacing:0.5px;color:#000;white-space:pre"><span style="color:#00f">End Sub</span></div>
<div class="t" style="left:311px;top:335px;font-size:10.5px;color:#1f6fdc">00010</div>
<div style="left:768px;top:198px;width:18px;height:172px;background:linear-gradient(90deg,#e6e6e6,#f6f6f6 50%,#ececec)"></div>
<svg style="left:772px;top:204px" width="9" height="5" viewBox="0 0 9 5"><path d="M0 5L4.5 0 9 5z" fill="#8a8a8a"/></svg>
<svg style="left:772px;top:359px" width="9" height="5" viewBox="0 0 9 5"><path d="M0 0L4.5 5 9 0z" fill="#8a8a8a"/></svg>
<div style="left:292px;top:370px;width:476px;height:18px;background:linear-gradient(180deg,#e6e6e6,#f6f6f6 50%,#ececec)"></div>
<svg style="left:297px;top:374px" width="5" height="9" viewBox="0 0 5 9"><path d="M5 0L0 4.5 5 9z" fill="#303030"/></svg>
<svg style="left:756px;top:374px" width="5" height="9" viewBox="0 0 5 9"><path d="M0 0L5 4.5 0 9z" fill="#303030"/></svg>
<div style="left:309px;top:371px;width:15px;height:16px;border:1px solid #8a8a8a;border-radius:2px;background:linear-gradient(180deg,#f4f4f4,#e8e8e8 50%,#cfcfcf)"></div>
<div style="left:768px;top:370px;width:18px;height:18px;background:#f0f0f0"></div>
<div style="left:773px;top:374px;width:11px;height:11px;background-image:radial-gradient(circle at 1px 1px,#a0a0a0 .8px,transparent 1.2px);background-size:3px 3px;clip-path:polygon(100% 0,100% 100%,0 100%)"></div>
<div style="left:290px;top:388px;width:496px;height:1px;background:#fff"></div>
<!-- status bar -->
<div style="left:8px;top:700px;width:938px;height:20px;background:#f1eeee;border-top:1px solid #fff"></div>
<div class="t" style="left:10px;top:706px;letter-spacing:-0.35px">Ready</div>
<div style="left:706px;top:702px;width:1px;height:17px;background:#d6d2d2"></div>
<div style="left:744px;top:702px;width:1px;height:17px;background:#d6d2d2"></div>
<div style="left:784px;top:702px;width:1px;height:17px;background:#d6d2d2"></div>
<div style="left:815px;top:702px;width:1px;height:17px;background:#d6d2d2"></div>
<div style="left:850px;top:702px;width:1px;height:17px;background:#d6d2d2"></div>
<div style="left:885px;top:702px;width:1px;height:17px;background:#d6d2d2"></div>
<div style="left:926px;top:702px;width:1px;height:17px;background:#d6d2d2"></div>
<div class="t" style="left:672px;top:705px">X:</div><div style="left:690px;top:705px;width:16px;height:14px;overflow:hidden"><div class="t" style="left:0;top:0">640</div></div>
<div class="t" style="left:708px;top:705px">Y:</div>
<div class="t" style="left:735px;top:705px">5</div>
<div class="t" style="left:890px;top:705px">RC8</div>
<div style="left:933px;top:707px;width:12px;height:12px;background-image:radial-gradient(circle at 1px 1px,#a0a0a0 .8px,transparent 1.2px);background-size:4px 4px;clip-path:polygon(100% 0,100% 100%,0 100%)"></div>

</body></html>
